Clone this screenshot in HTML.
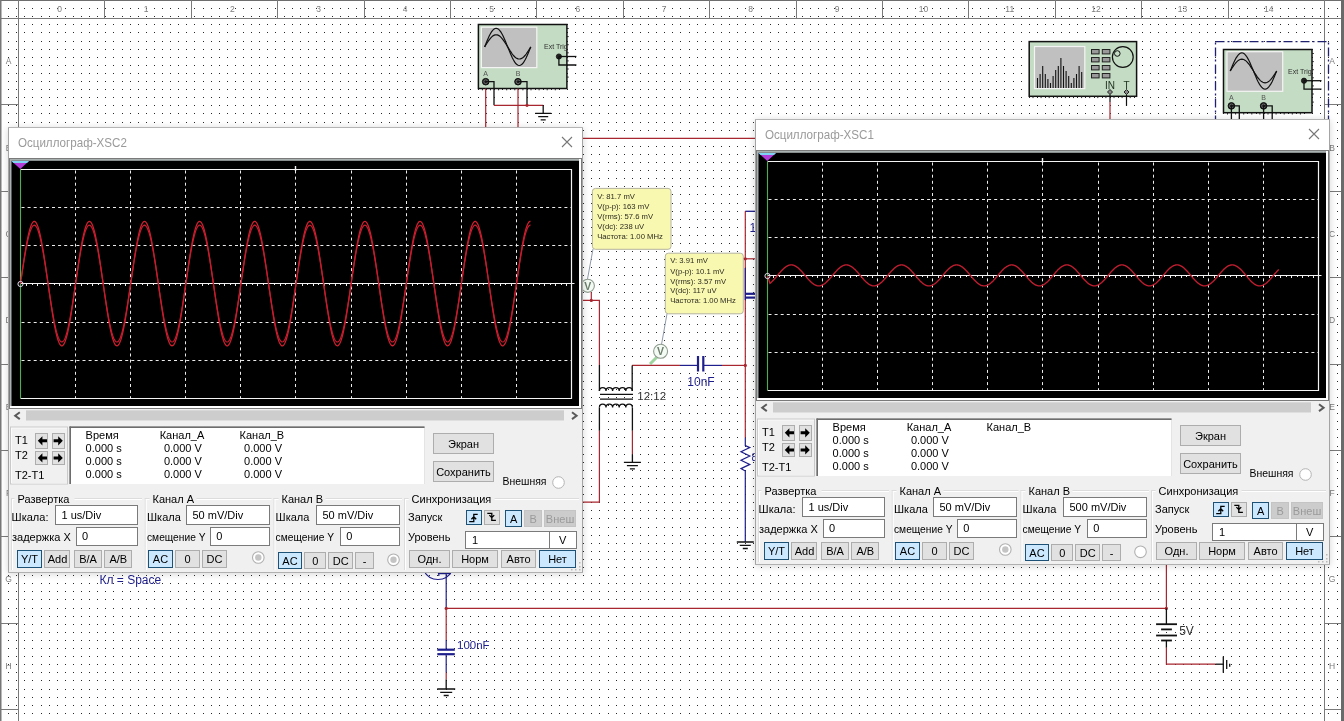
<!DOCTYPE html><html><head><meta charset="utf-8"><style>
body{margin:0;width:1344px;height:721px;overflow:hidden;background:#fff;position:relative;font-family:"Liberation Sans",sans-serif}
.a{position:absolute}
.win{position:absolute;width:575px;height:446px;background:#f0f0f0;box-shadow:0 1px 7px rgba(0,0,0,.16);}
.win svg{display:block;font-family:"Liberation Sans",sans-serif}
svg{will-change:transform}
</style></head><body><svg class="a" style="left:0;top:0" width="1344" height="721" font-family="Liberation Sans, sans-serif"><defs><path id="dr" d="M8 0h1v1h-1zM16 0h1v1h-1zM24 0h1v1h-1zM32 0h1v1h-1zM41 0h1v1h-1zM49 0h1v1h-1zM57 0h1v1h-1zM65 0h1v1h-1zM73 0h1v1h-1zM81 0h1v1h-1zM89 0h1v1h-1zM97 0h1v1h-1zM105 0h1v1h-1zM113 0h1v1h-1zM122 0h1v1h-1zM130 0h1v1h-1zM138 0h1v1h-1zM146 0h1v1h-1zM154 0h1v1h-1zM162 0h1v1h-1zM170 0h1v1h-1zM178 0h1v1h-1zM186 0h1v1h-1zM194 0h1v1h-1zM203 0h1v1h-1zM211 0h1v1h-1zM219 0h1v1h-1zM227 0h1v1h-1zM235 0h1v1h-1zM243 0h1v1h-1zM251 0h1v1h-1zM259 0h1v1h-1zM267 0h1v1h-1zM275 0h1v1h-1zM284 0h1v1h-1zM292 0h1v1h-1zM300 0h1v1h-1zM308 0h1v1h-1zM316 0h1v1h-1zM324 0h1v1h-1zM332 0h1v1h-1zM340 0h1v1h-1zM348 0h1v1h-1zM356 0h1v1h-1zM365 0h1v1h-1zM373 0h1v1h-1zM381 0h1v1h-1zM389 0h1v1h-1zM397 0h1v1h-1zM405 0h1v1h-1zM413 0h1v1h-1zM421 0h1v1h-1zM429 0h1v1h-1zM437 0h1v1h-1zM446 0h1v1h-1zM454 0h1v1h-1zM462 0h1v1h-1zM470 0h1v1h-1zM478 0h1v1h-1zM486 0h1v1h-1zM494 0h1v1h-1zM502 0h1v1h-1zM510 0h1v1h-1zM518 0h1v1h-1zM527 0h1v1h-1zM535 0h1v1h-1zM543 0h1v1h-1zM551 0h1v1h-1zM559 0h1v1h-1zM567 0h1v1h-1zM575 0h1v1h-1zM583 0h1v1h-1zM591 0h1v1h-1zM599 0h1v1h-1zM608 0h1v1h-1zM616 0h1v1h-1zM624 0h1v1h-1zM632 0h1v1h-1zM640 0h1v1h-1zM648 0h1v1h-1zM656 0h1v1h-1zM664 0h1v1h-1zM672 0h1v1h-1zM680 0h1v1h-1zM689 0h1v1h-1zM697 0h1v1h-1zM705 0h1v1h-1zM713 0h1v1h-1zM721 0h1v1h-1zM729 0h1v1h-1zM737 0h1v1h-1zM745 0h1v1h-1zM753 0h1v1h-1zM761 0h1v1h-1zM770 0h1v1h-1zM778 0h1v1h-1zM786 0h1v1h-1zM794 0h1v1h-1zM802 0h1v1h-1zM810 0h1v1h-1zM818 0h1v1h-1zM826 0h1v1h-1zM834 0h1v1h-1zM842 0h1v1h-1zM851 0h1v1h-1zM859 0h1v1h-1zM867 0h1v1h-1zM875 0h1v1h-1zM883 0h1v1h-1zM891 0h1v1h-1zM899 0h1v1h-1zM907 0h1v1h-1zM915 0h1v1h-1zM923 0h1v1h-1zM932 0h1v1h-1zM940 0h1v1h-1zM948 0h1v1h-1zM956 0h1v1h-1zM964 0h1v1h-1zM972 0h1v1h-1zM980 0h1v1h-1zM988 0h1v1h-1zM996 0h1v1h-1zM1004 0h1v1h-1zM1013 0h1v1h-1zM1021 0h1v1h-1zM1029 0h1v1h-1zM1037 0h1v1h-1zM1045 0h1v1h-1zM1053 0h1v1h-1zM1061 0h1v1h-1zM1069 0h1v1h-1zM1077 0h1v1h-1zM1085 0h1v1h-1zM1094 0h1v1h-1zM1102 0h1v1h-1zM1110 0h1v1h-1zM1118 0h1v1h-1zM1126 0h1v1h-1zM1134 0h1v1h-1zM1142 0h1v1h-1zM1150 0h1v1h-1zM1158 0h1v1h-1zM1166 0h1v1h-1zM1175 0h1v1h-1zM1183 0h1v1h-1zM1191 0h1v1h-1zM1199 0h1v1h-1zM1207 0h1v1h-1zM1215 0h1v1h-1zM1223 0h1v1h-1zM1231 0h1v1h-1zM1239 0h1v1h-1zM1247 0h1v1h-1zM1256 0h1v1h-1zM1264 0h1v1h-1zM1272 0h1v1h-1zM1280 0h1v1h-1zM1288 0h1v1h-1zM1296 0h1v1h-1zM1304 0h1v1h-1zM1312 0h1v1h-1zM1320 0h1v1h-1zM1328 0h1v1h-1zM1337 0h1v1h-1z" fill="#282828"/></defs><use href="#dr" y="8"/><use href="#dr" y="16"/><use href="#dr" y="24"/><use href="#dr" y="32"/><use href="#dr" y="41"/><use href="#dr" y="49"/><use href="#dr" y="57"/><use href="#dr" y="65"/><use href="#dr" y="73"/><use href="#dr" y="81"/><use href="#dr" y="89"/><use href="#dr" y="97"/><use href="#dr" y="105"/><use href="#dr" y="113"/><use href="#dr" y="122"/><use href="#dr" y="130"/><use href="#dr" y="138"/><use href="#dr" y="146"/><use href="#dr" y="154"/><use href="#dr" y="162"/><use href="#dr" y="170"/><use href="#dr" y="178"/><use href="#dr" y="186"/><use href="#dr" y="194"/><use href="#dr" y="203"/><use href="#dr" y="211"/><use href="#dr" y="219"/><use href="#dr" y="227"/><use href="#dr" y="235"/><use href="#dr" y="243"/><use href="#dr" y="251"/><use href="#dr" y="259"/><use href="#dr" y="267"/><use href="#dr" y="275"/><use href="#dr" y="284"/><use href="#dr" y="292"/><use href="#dr" y="300"/><use href="#dr" y="308"/><use href="#dr" y="316"/><use href="#dr" y="324"/><use href="#dr" y="332"/><use href="#dr" y="340"/><use href="#dr" y="348"/><use href="#dr" y="356"/><use href="#dr" y="365"/><use href="#dr" y="373"/><use href="#dr" y="381"/><use href="#dr" y="389"/><use href="#dr" y="397"/><use href="#dr" y="405"/><use href="#dr" y="413"/><use href="#dr" y="421"/><use href="#dr" y="429"/><use href="#dr" y="437"/><use href="#dr" y="446"/><use href="#dr" y="454"/><use href="#dr" y="462"/><use href="#dr" y="470"/><use href="#dr" y="478"/><use href="#dr" y="486"/><use href="#dr" y="494"/><use href="#dr" y="502"/><use href="#dr" y="510"/><use href="#dr" y="518"/><use href="#dr" y="527"/><use href="#dr" y="535"/><use href="#dr" y="543"/><use href="#dr" y="551"/><use href="#dr" y="559"/><use href="#dr" y="567"/><use href="#dr" y="575"/><use href="#dr" y="583"/><use href="#dr" y="591"/><use href="#dr" y="599"/><use href="#dr" y="608"/><use href="#dr" y="616"/><use href="#dr" y="624"/><use href="#dr" y="632"/><use href="#dr" y="640"/><use href="#dr" y="648"/><use href="#dr" y="656"/><use href="#dr" y="664"/><use href="#dr" y="672"/><use href="#dr" y="680"/><use href="#dr" y="689"/><use href="#dr" y="697"/><use href="#dr" y="705"/><use href="#dr" y="713"/><rect x="0" y="0" width="1344" height="1" fill="#6e6e6e"/><rect x="0" y="18" width="1341" height="1" fill="#7a7a7a"/><rect x="0" y="0" width="1.5" height="721" fill="#777"/><rect x="18" y="0" width="1" height="721" fill="#7a7a7a"/><rect x="1324" y="0" width="1" height="721" fill="#7a7a7a"/><rect x="1341" y="0" width="3" height="721" fill="#6a6a6a"/><rect x="104" y="0" width="1" height="18" fill="#7a7a7a"/><rect x="191" y="0" width="1" height="18" fill="#7a7a7a"/><rect x="277" y="0" width="1" height="18" fill="#7a7a7a"/><rect x="364" y="0" width="1" height="18" fill="#7a7a7a"/><rect x="450" y="0" width="1" height="18" fill="#7a7a7a"/><rect x="536" y="0" width="1" height="18" fill="#7a7a7a"/><rect x="623" y="0" width="1" height="18" fill="#7a7a7a"/><rect x="709" y="0" width="1" height="18" fill="#7a7a7a"/><rect x="796" y="0" width="1" height="18" fill="#7a7a7a"/><rect x="882" y="0" width="1" height="18" fill="#7a7a7a"/><rect x="968" y="0" width="1" height="18" fill="#7a7a7a"/><rect x="1055" y="0" width="1" height="18" fill="#7a7a7a"/><rect x="1141" y="0" width="1" height="18" fill="#7a7a7a"/><rect x="1228" y="0" width="1" height="18" fill="#7a7a7a"/><text x="59.6" y="12" font-size="8.5" fill="#7c7c7c" text-anchor="middle">0</text><text x="146.0" y="12" font-size="8.5" fill="#7c7c7c" text-anchor="middle">1</text><text x="232.3" y="12" font-size="8.5" fill="#7c7c7c" text-anchor="middle">2</text><text x="318.7" y="12" font-size="8.5" fill="#7c7c7c" text-anchor="middle">3</text><text x="405.1" y="12" font-size="8.5" fill="#7c7c7c" text-anchor="middle">4</text><text x="491.5" y="12" font-size="8.5" fill="#7c7c7c" text-anchor="middle">5</text><text x="577.9" y="12" font-size="8.5" fill="#7c7c7c" text-anchor="middle">6</text><text x="664.2" y="12" font-size="8.5" fill="#7c7c7c" text-anchor="middle">7</text><text x="750.6" y="12" font-size="8.5" fill="#7c7c7c" text-anchor="middle">8</text><text x="837.0" y="12" font-size="8.5" fill="#7c7c7c" text-anchor="middle">9</text><text x="923.4" y="12" font-size="8.5" fill="#7c7c7c" text-anchor="middle">10</text><text x="1009.7" y="12" font-size="8.5" fill="#7c7c7c" text-anchor="middle">11</text><text x="1096.1" y="12" font-size="8.5" fill="#7c7c7c" text-anchor="middle">12</text><text x="1182.5" y="12" font-size="8.5" fill="#7c7c7c" text-anchor="middle">13</text><text x="1268.8" y="12" font-size="8.5" fill="#7c7c7c" text-anchor="middle">14</text><rect x="0" y="104" width="18" height="1" fill="#7a7a7a"/><rect x="1325" y="104" width="16" height="1" fill="#7a7a7a"/><rect x="0" y="191" width="18" height="1" fill="#7a7a7a"/><rect x="1325" y="191" width="16" height="1" fill="#7a7a7a"/><rect x="0" y="277" width="18" height="1" fill="#7a7a7a"/><rect x="1325" y="277" width="16" height="1" fill="#7a7a7a"/><rect x="0" y="364" width="18" height="1" fill="#7a7a7a"/><rect x="1325" y="364" width="16" height="1" fill="#7a7a7a"/><rect x="0" y="450" width="18" height="1" fill="#7a7a7a"/><rect x="1325" y="450" width="16" height="1" fill="#7a7a7a"/><rect x="0" y="536" width="18" height="1" fill="#7a7a7a"/><rect x="1325" y="536" width="16" height="1" fill="#7a7a7a"/><rect x="0" y="623" width="18" height="1" fill="#7a7a7a"/><rect x="1325" y="623" width="16" height="1" fill="#7a7a7a"/><rect x="0" y="709" width="18" height="1" fill="#7a7a7a"/><rect x="1325" y="709" width="16" height="1" fill="#7a7a7a"/><text x="8.5" y="64.2" font-size="8.5" fill="#7c7c7c" text-anchor="middle">A</text><text x="1332" y="64.2" font-size="8.5" fill="#7c7c7c" text-anchor="middle">A</text><text x="8.5" y="150.6" font-size="8.5" fill="#7c7c7c" text-anchor="middle">B</text><text x="1332" y="150.6" font-size="8.5" fill="#7c7c7c" text-anchor="middle">B</text><text x="8.5" y="236.9" font-size="8.5" fill="#7c7c7c" text-anchor="middle">C</text><text x="1332" y="236.9" font-size="8.5" fill="#7c7c7c" text-anchor="middle">C</text><text x="8.5" y="323.3" font-size="8.5" fill="#7c7c7c" text-anchor="middle">D</text><text x="1332" y="323.3" font-size="8.5" fill="#7c7c7c" text-anchor="middle">D</text><text x="8.5" y="409.7" font-size="8.5" fill="#7c7c7c" text-anchor="middle">E</text><text x="1332" y="409.7" font-size="8.5" fill="#7c7c7c" text-anchor="middle">E</text><text x="8.5" y="496.1" font-size="8.5" fill="#7c7c7c" text-anchor="middle">F</text><text x="1332" y="496.1" font-size="8.5" fill="#7c7c7c" text-anchor="middle">F</text><text x="8.5" y="582.4" font-size="8.5" fill="#7c7c7c" text-anchor="middle">G</text><text x="1332" y="582.4" font-size="8.5" fill="#7c7c7c" text-anchor="middle">G</text><text x="8.5" y="668.8" font-size="8.5" fill="#7c7c7c" text-anchor="middle">H</text><text x="1332" y="668.8" font-size="8.5" fill="#7c7c7c" text-anchor="middle">H</text><rect x="478.4" y="24.5" width="88.5" height="64.0" fill="#c3dcc3" stroke="#111" stroke-width="1.5"/><path d="M482.4 88.5v1.8M490.5 88.5v1.8M498.6 88.5v1.8M506.7 88.5v1.8M514.8 88.5v1.8M522.9 88.5v1.8M531.0 88.5v1.8M539.1 88.5v1.8M547.2 88.5v1.8M555.3 88.5v1.8M566.9 28.5h1.8M566.9 36.6h1.8M566.9 44.7h1.8M566.9 52.8h1.8M566.9 60.9h1.8M566.9 69.0h1.8M566.9 77.1h1.8" stroke="#222" stroke-width="1"/><rect x="481.4" y="27.2" width="55.39999999999998" height="40.39999999999999" fill="#c0c0c0" stroke="#f4f4f4" stroke-width="1.2"/><path d="M484.6 46.9L485.8 44.0L486.9 41.2L488.1 38.5L489.2 36.0L490.4 33.8L491.5 31.9L492.7 30.3L493.8 29.2L495.0 28.5L496.1 28.3L497.3 28.5L498.5 29.2L499.6 30.3L500.8 31.9L501.9 33.8L503.1 36.0L504.2 38.5L505.4 41.2L506.5 44.0L507.7 46.9L508.9 49.8L510.0 52.6L511.2 55.3L512.3 57.8L513.5 60.0L514.6 61.9L515.8 63.5L516.9 64.6L518.1 65.3L519.2 65.5L520.4 65.3L521.6 64.6L522.7 63.5L523.9 61.9L525.0 60.0L526.2 57.8L527.3 55.3L528.5 52.6L529.6 49.8L530.8 46.9" stroke="#111" stroke-width="1.2" fill="none"/><path d="M484.6 46.9L485.8 45.0L486.9 43.2L488.1 41.4L489.2 39.8L490.4 38.3L491.5 37.1L492.7 36.1L493.8 35.4L495.0 34.9L496.1 34.8L497.3 34.9L498.5 35.4L499.6 36.1L500.8 37.1L501.9 38.3L503.1 39.8L504.2 41.4L505.4 43.2L506.5 45.0L507.7 46.9L508.9 48.8L510.0 50.6L511.2 52.4L512.3 54.0L513.5 55.5L514.6 56.7L515.8 57.7L516.9 58.4L518.1 58.9L519.2 59.0L520.4 58.9L521.6 58.4L522.7 57.7L523.9 56.7L525.0 55.5L526.2 54.0L527.3 52.4L528.5 50.6L529.6 48.8L530.8 46.9" stroke="#111" stroke-width="1.2" fill="none"/><text x="544" y="49" font-size="7" fill="#333">Ext Trig</text><circle cx="558.9" cy="56.5" r="2.6" fill="#222" stroke="#111" stroke-width="0.8"/><path d="M558.9 56.5L576.4 56.5" stroke="#111" stroke-width="1.3" fill="none"/><path d="M558.9 56.5L558.9 65.0L576.4 65.0" stroke="#111" stroke-width="1.3" fill="none"/><circle cx="485.7" cy="81.7" r="3.3" fill="#1a1a1a" stroke="#111" stroke-width="1"/><circle cx="485.7" cy="81.7" r="1.9" fill="none" stroke="#9a9a9a" stroke-width="0.6"/><text x="485.7" y="75.9" font-size="7" fill="#555" text-anchor="middle">A</text><circle cx="518" cy="81.7" r="3.3" fill="#1a1a1a" stroke="#111" stroke-width="1"/><circle cx="518" cy="81.7" r="1.9" fill="none" stroke="#9a9a9a" stroke-width="0.6"/><text x="518" y="75.9" font-size="7" fill="#555" text-anchor="middle">B</text><path d="M485.7 81.7L494 81.7L494 105.3" stroke="#111" stroke-width="1.3" fill="none"/><path d="M518 81.7L527 81.7L527 105.3" stroke="#111" stroke-width="1.3" fill="none"/><path d="M494 105.3L543.2 105.3" stroke="#a8262f" stroke-width="1.2" fill="none"/><path d="M543.2 105.3L543.2 113.4" stroke="#111" stroke-width="1.3" fill="none"/><path d="M535.2 113.4h16M538.2 116.7h10M540.7 119.9h5" stroke="#111" stroke-width="1.3"/><circle cx="527" cy="105.3" r="1.6" fill="#a8262f"/><path d="M485.7 88.5L485.7 127" stroke="#a8262f" stroke-width="1.2" fill="none"/><path d="M518 88.5L518 127" stroke="#a8262f" stroke-width="1.2" fill="none"/><path d="M580 138.3L756 138.3" stroke="#a8262f" stroke-width="1.2" fill="none"/><rect x="1029.2" y="41.6" width="107.4" height="54.7" fill="#c3dcc3" stroke="#111" stroke-width="1.5"/><path d="M1033.0 96.3v1.8M1041.1 96.3v1.8M1049.2 96.3v1.8M1057.3 96.3v1.8M1065.4 96.3v1.8M1073.5 96.3v1.8M1081.6 96.3v1.8M1089.7 96.3v1.8M1097.8 96.3v1.8M1105.9 96.3v1.8M1114.0 96.3v1.8M1122.1 96.3v1.8M1130.2 96.3v1.8" stroke="#222"/><rect x="1034.5" y="46.5" width="50.3" height="42.1" fill="#c0c0c0" stroke="#f4f4f4" stroke-width="1.2"/><path d="M1037.5 88V78M1040.1 88V74M1042.7 88V66M1045.3 88V74M1047.9 88V79M1050.5 88V83M1053.1 88V76M1055.7 88V70M1058.3 88V66M1060.9 88V58M1063.5 88V66M1066.1 88V71M1068.7 88V76M1071.3 88V83M1073.9 88V78M1076.5 88V74M1079.1 88V66M1081.7 88V72" stroke="#111" stroke-width="1.1"/><rect x="1091.5" y="49.5" width="7.6" height="4.4" fill="#999" stroke="#222" stroke-width="1"/><rect x="1102.3" y="49.5" width="7.6" height="4.4" fill="#999" stroke="#222" stroke-width="1"/><rect x="1091.5" y="57.5" width="7.6" height="4.4" fill="#999" stroke="#222" stroke-width="1"/><rect x="1102.3" y="57.5" width="7.6" height="4.4" fill="#999" stroke="#222" stroke-width="1"/><rect x="1091.5" y="65.5" width="7.6" height="4.4" fill="#999" stroke="#222" stroke-width="1"/><rect x="1102.3" y="65.5" width="7.6" height="4.4" fill="#999" stroke="#222" stroke-width="1"/><rect x="1091.5" y="73.5" width="7.6" height="4.4" fill="#999" stroke="#222" stroke-width="1"/><rect x="1102.3" y="73.5" width="7.6" height="4.4" fill="#999" stroke="#222" stroke-width="1"/><circle cx="1122.8" cy="57" r="10.4" fill="none" stroke="#111" stroke-width="1.2"/><circle cx="1117.3" cy="53.5" r="2.8" fill="none" stroke="#111" stroke-width="1"/><text x="1110" y="88.5" font-size="10" fill="#223322" text-anchor="middle">IN</text><text x="1126.5" y="88.5" font-size="10" fill="#223322" text-anchor="middle">T</text><path d="M1110 89.5l2.5 2.5-2.5 2.5-2.5-2.5zM1126.5 89.5l2.5 2.5-2.5 2.5-2.5-2.5z" fill="#888" stroke="#222" stroke-width="1"/><path d="M1110 94.5L1110 102" stroke="#111" stroke-width="1.2" fill="none"/><path d="M1110 102L1110 120" stroke="#a8262f" stroke-width="1.2" fill="none"/><path d="M1126.5 94.5L1126.5 105.8" stroke="#111" stroke-width="1.2" fill="none"/><rect x="1215.5" y="41.6" width="113" height="90" fill="none" stroke="#20206e" stroke-width="1.3" stroke-dasharray="9 3 2 3"/><rect x="1223.5" y="49.5" width="88.5" height="63.2" fill="#c3dcc3" stroke="#111" stroke-width="1.5"/><path d="M1227.5 112.7v1.8M1235.6 112.7v1.8M1243.7 112.7v1.8M1251.8 112.7v1.8M1259.9 112.7v1.8M1268.0 112.7v1.8M1276.1 112.7v1.8M1284.2 112.7v1.8M1292.3 112.7v1.8M1300.4 112.7v1.8M1312 53.5h1.8M1312 61.6h1.8M1312 69.7h1.8M1312 77.8h1.8M1312 85.9h1.8M1312 94.0h1.8M1312 102.1h1.8" stroke="#222" stroke-width="1"/><rect x="1227" y="51.7" width="55.700000000000045" height="39.599999999999994" fill="#c0c0c0" stroke="#f4f4f4" stroke-width="1.2"/><path d="M1230.2 71.0L1231.4 68.2L1232.5 65.4L1233.7 62.7L1234.9 60.3L1236.0 58.1L1237.2 56.3L1238.3 54.8L1239.5 53.7L1240.7 53.0L1241.8 52.8L1243.0 53.0L1244.2 53.7L1245.3 54.8L1246.5 56.3L1247.6 58.1L1248.8 60.3L1250.0 62.7L1251.1 65.4L1252.3 68.2L1253.5 71.0L1254.6 73.8L1255.8 76.6L1256.9 79.3L1258.1 81.7L1259.3 83.9L1260.4 85.7L1261.6 87.2L1262.8 88.3L1263.9 89.0L1265.1 89.2L1266.2 89.0L1267.4 88.3L1268.6 87.2L1269.7 85.7L1270.9 83.9L1272.1 81.7L1273.2 79.3L1274.4 76.6L1275.5 73.8L1276.7 71.0" stroke="#111" stroke-width="1.2" fill="none"/><path d="M1230.2 71.0L1231.4 69.1L1232.5 67.3L1233.7 65.6L1234.9 64.0L1236.0 62.6L1237.2 61.4L1238.3 60.4L1239.5 59.7L1240.7 59.3L1241.8 59.1L1243.0 59.3L1244.2 59.7L1245.3 60.4L1246.5 61.4L1247.6 62.6L1248.8 64.0L1250.0 65.6L1251.1 67.3L1252.3 69.1L1253.5 71.0L1254.6 72.9L1255.8 74.7L1256.9 76.4L1258.1 78.0L1259.3 79.4L1260.4 80.6L1261.6 81.6L1262.8 82.3L1263.9 82.7L1265.1 82.9L1266.2 82.7L1267.4 82.3L1268.6 81.6L1269.7 80.6L1270.9 79.4L1272.1 78.0L1273.2 76.4L1274.4 74.7L1275.5 72.9L1276.7 71.0" stroke="#111" stroke-width="1.2" fill="none"/><text x="1288" y="74" font-size="7" fill="#333">Ext Trig</text><circle cx="1304" cy="80.7" r="2.6" fill="#222" stroke="#111" stroke-width="0.8"/><path d="M1304 80.7L1321.5 80.7" stroke="#111" stroke-width="1.3" fill="none"/><path d="M1304 80.7L1304 89.2L1321.5 89.2" stroke="#111" stroke-width="1.3" fill="none"/><circle cx="1231.4" cy="105.9" r="3.3" fill="#1a1a1a" stroke="#111" stroke-width="1"/><circle cx="1231.4" cy="105.9" r="1.9" fill="none" stroke="#9a9a9a" stroke-width="0.6"/><text x="1231.4" y="100.10000000000001" font-size="7" fill="#555" text-anchor="middle">A</text><circle cx="1263.6" cy="105.9" r="3.3" fill="#1a1a1a" stroke="#111" stroke-width="1"/><circle cx="1263.6" cy="105.9" r="1.9" fill="none" stroke="#9a9a9a" stroke-width="0.6"/><text x="1263.6" y="100.10000000000001" font-size="7" fill="#555" text-anchor="middle">B</text><path d="M1231.4 105.9L1239.3 105.9L1239.3 120" stroke="#111" stroke-width="1.3" fill="none"/><path d="M1263.6 105.9L1272.2 105.9L1272.2 120" stroke="#111" stroke-width="1.3" fill="none"/><path d="M1231.4 105.9L1231.4 120" stroke="#111" stroke-width="1.3" fill="none"/><path d="M1263.6 105.9L1263.6 120" stroke="#111" stroke-width="1.3" fill="none"/><path d="M587.5 279L593 249" stroke="#8f9aaa" stroke-width="1" fill="none"/><rect x="592.4" y="188.4" width="78.60000000000002" height="60.900000000000006" rx="3" fill="#f9f8b0" stroke="#b4b4a0" stroke-width="1"/><text x="597.2" y="198.6" font-size="7.7" fill="#2c2c20">V: 81.7 mV</text><text x="597.2" y="208.8" font-size="7.7" fill="#2c2c20">V(p-p): 163 mV</text><text x="597.2" y="219" font-size="7.7" fill="#2c2c20">V(rms): 57.6 mV</text><text x="597.2" y="228.7" font-size="7.7" fill="#2c2c20">V(dc): 238 uV</text><text x="597.2" y="238.6" font-size="7.7" fill="#2c2c20">Частота: 1.00 MHz</text><path d="M661.5 344.5L667 313.8" stroke="#8f9aaa" stroke-width="1" fill="none"/><rect x="665.3" y="253.2" width="78.0" height="60.60000000000002" rx="3" fill="#f9f8b0" stroke="#b4b4a0" stroke-width="1"/><text x="670.2" y="263.3" font-size="7.7" fill="#2c2c20">V: 3.91 mV</text><text x="670.2" y="273.5" font-size="7.7" fill="#2c2c20">V(p-p): 10.1 mV</text><text x="670.2" y="283.7" font-size="7.7" fill="#2c2c20">V(rms): 3.57 mV</text><text x="670.2" y="293.4" font-size="7.7" fill="#2c2c20">V(dc): 117 uV</text><text x="670.2" y="303.3" font-size="7.7" fill="#2c2c20">Частота: 1.00 MHz</text><path d="M591.3 292L591.3 300.4" stroke="#a8262f" stroke-width="1.2" fill="none"/><circle cx="587.8" cy="285.8" r="6.6" fill="#f4faf4" stroke="#8e9c8e" stroke-width="1.1"/><text x="587.8" y="289.6" font-size="10.5" fill="#6c7e6c" text-anchor="middle" font-weight="bold">V</text><path d="M582 300.4L599.4 300.4L599.4 365" stroke="#a8262f" stroke-width="1.2" fill="none"/><circle cx="591.3" cy="300.4" r="1.6" fill="#a8262f"/><path d="M599.4 365L599.4 391" stroke="#111" stroke-width="1.3" fill="none"/><path d="M650 364L656.5 357.5" stroke="#9ed49e" stroke-width="3" fill="none"/><circle cx="660.6" cy="351.3" r="7" fill="#f4faf4" stroke="#8e9c8e" stroke-width="1.1"/><text x="660.6" y="355.1" font-size="10.5" fill="#6c7e6c" text-anchor="middle" font-weight="bold">V</text><path d="M632.2 365.4L680 365.4" stroke="#a8262f" stroke-width="1.2" fill="none"/><path d="M680 365.4L698 365.4" stroke="#1e1e8c" stroke-width="1.2" fill="none"/><path d="M703.3 365.4L722 365.4" stroke="#1e1e8c" stroke-width="1.2" fill="none"/><path d="M722 365.4L745.5 365.4" stroke="#a8262f" stroke-width="1.2" fill="none"/><path d="M698 356L698 371.5" stroke="#1e1e8c" stroke-width="2.2" fill="none"/><path d="M703.3 356L703.3 371.5" stroke="#1e1e8c" stroke-width="2.2" fill="none"/><text x="701" y="385.5" font-size="12" fill="#1e1e8c" text-anchor="middle">10nF</text><path d="M632.2 365.4L632.2 391" stroke="#111" stroke-width="1.3" fill="none"/><path d="M599.4 391a3.3 3.3 0 0 1 6.6 0a3.3 3.3 0 0 1 6.6 0a3.3 3.3 0 0 1 6.6 0a3.3 3.3 0 0 1 6.6 0a3.3 3.3 0 0 1 6.6 0" stroke="#111" stroke-width="1.3" fill="none"/><path d="M599.4 407.5a3.3 3.3 0 0 1 6.6 0a3.3 3.3 0 0 1 6.6 0a3.3 3.3 0 0 1 6.6 0a3.3 3.3 0 0 1 6.6 0a3.3 3.3 0 0 1 6.6 0" stroke="#111" stroke-width="1.3" fill="none"/><path d="M600 394.4L633 394.4" stroke="#111" stroke-width="1.3" fill="none"/><path d="M600 399.1L633 399.1" stroke="#111" stroke-width="1.3" fill="none"/><text x="637.3" y="400.3" font-size="11.5" fill="#333">12:12</text><path d="M599.4 407.5L599.4 430.8" stroke="#111" stroke-width="1.3" fill="none"/><path d="M599.4 430.8L599.4 502.2L580 502.2" stroke="#a8262f" stroke-width="1.2" fill="none"/><path d="M632.4 407.5L632.4 430.8" stroke="#111" stroke-width="1.3" fill="none"/><path d="M632.4 430.8L632.4 454.4" stroke="#a8262f" stroke-width="1.2" fill="none"/><path d="M632.4 454.4L632.4 462.4" stroke="#111" stroke-width="1.3" fill="none"/><path d="M623.9 462.4h17M626.9 465.7h11M629.9 468.9h5" stroke="#111" stroke-width="1.3"/><path d="M745.3 211.3L757 211.3" stroke="#1e1e8c" stroke-width="1.3" fill="none"/><text x="749.5" y="232" font-size="12" fill="#1e1e8c">1</text><path d="M745.3 211.3L745.3 437.8" stroke="#a8262f" stroke-width="1.2" fill="none"/><circle cx="745.3" cy="258.8" r="1.6" fill="#a8262f"/><path d="M745.3 258.8L757 258.8" stroke="#a8262f" stroke-width="1.2" fill="none"/><circle cx="745.3" cy="365.4" r="1.6" fill="#a8262f"/><path d="M745.3 268L745.3 300" stroke="#1e1e8c" stroke-width="1.2" fill="none"/><path d="M745.3 293.8L757 293.8" stroke="#1e1e8c" stroke-width="2.2" fill="none"/><path d="M745.3 297.6L757 297.6" stroke="#1e1e8c" stroke-width="2.2" fill="none"/><path d="M745.3 437.8L745.3 445.5L749.8 447.6L741 451.8L749.8 456L741 460.2L749.8 464.4L741 468.6L745.3 471L745.3 542" stroke="#1e1e8c" stroke-width="1.2" fill="none"/><path d="M736.8 542h17M739.8 545.3h11M742.8 548.5h5" stroke="#111" stroke-width="1.3"/><text x="751.5" y="461" font-size="10" fill="#1e1e8c">8</text><text x="99.5" y="584" font-size="12" fill="#1e1e8c">Кл = Space</text><path d="M424 571A15.8 15.8 0 0 0 452 571" stroke="#1e1e8c" stroke-width="1.1" fill="none"/><path d="M437.9 573.6L450.9 573.6" stroke="#1e1e8c" stroke-width="1.2" fill="none"/><path d="M438.8 571L438.8 576" stroke="#1e1e8c" stroke-width="1.2" fill="none"/><path d="M446.2 573.6L446.2 608.4" stroke="#1e1e8c" stroke-width="1.2" fill="none"/><path d="M446.2 608.4L1166.4 608.4" stroke="#a8262f" stroke-width="1.2" fill="none"/><circle cx="446.2" cy="608.4" r="1.6" fill="#a8262f"/><path d="M446.2 608.4L446.2 640" stroke="#a8262f" stroke-width="1.2" fill="none"/><path d="M446.2 640L446.2 649.7" stroke="#1e1e8c" stroke-width="1.2" fill="none"/><path d="M446.2 654.2L446.2 672.6" stroke="#1e1e8c" stroke-width="1.2" fill="none"/><path d="M437.3 649.7L454.8 649.7" stroke="#1e1e8c" stroke-width="2.2" fill="none"/><path d="M437.3 654.2L454.8 654.2" stroke="#1e1e8c" stroke-width="2.2" fill="none"/><path d="M446.2 672.6L446.2 679.4" stroke="#a8262f" stroke-width="1.2" fill="none"/><path d="M446.2 679.4L446.2 689" stroke="#111" stroke-width="1.3" fill="none"/><path d="M437.2 689h18M440.2 692.3h12M443.7 695.5h5" stroke="#111" stroke-width="1.3"/><text x="457" y="648.5" font-size="11.5" fill="#1e1e8c">100nF</text><path d="M1166.4 563L1166.4 608.4" stroke="#a8262f" stroke-width="1.2" fill="none"/><circle cx="1166.4" cy="608.4" r="1.6" fill="#a8262f"/><path d="M1166.4 608.4L1166.4 624.2" stroke="#111" stroke-width="1.3" fill="none"/><path d="M1156.1 624.2L1177 624.2" stroke="#111" stroke-width="1.8" fill="none"/><path d="M1161.1 629.4L1171.9 629.4" stroke="#111" stroke-width="1.8" fill="none"/><path d="M1156.1 635.5L1177 635.5" stroke="#111" stroke-width="1.8" fill="none"/><path d="M1161.1 640.5L1171.9 640.5" stroke="#111" stroke-width="1.8" fill="none"/><path d="M1166.4 640.5L1166.4 647.8" stroke="#111" stroke-width="1.3" fill="none"/><path d="M1166.4 647.8L1166.4 664.2L1215.5 664.2" stroke="#a8262f" stroke-width="1.2" fill="none"/><path d="M1215.5 664.2L1223.3 664.2" stroke="#111" stroke-width="1.3" fill="none"/><path d="M1223.3 656.4v16.4M1226.7 660v9M1229.7 663.8v3" stroke="#111" stroke-width="1.3"/><text x="1179.2" y="635.4" font-size="12" fill="#333">5V</text></svg><div class="win" style="left:8px;top:127px"><svg width="575" height="446"><rect x="0.00" y="0.00" width="575.00" height="446.00" fill="#f0f0f0"/><rect x="0.00" y="0.00" width="575.00" height="31.00" fill="#ffffff"/><rect x="0.00" y="31.00" width="575.00" height="1.00" fill="#6e6e6e"/><rect x="0.00" y="0.00" width="1.00" height="446.00" fill="#a4a4a4"/><rect x="574.00" y="0.00" width="1.00" height="446.00" fill="#a4a4a4"/><rect x="0.00" y="445.00" width="575.00" height="1.00" fill="#b0b0b0"/><rect x="0.00" y="0.00" width="575.00" height="1.00" fill="#b4b4b4"/><path d="M571 435h1.5v1.5h-1.5zM571 439h1.5v1.5h-1.5zM567 442h1.5v1.5h-1.5zM571 442h1.5v1.5h-1.5zM563 442h1.5v1.5h-1.5z" fill="#b8b8b8"/><text x="0" y="20.2" font-size="13.2" fill="#9a9a9a" transform="translate(9.9 0) scale(0.88 1)">Осциллограф-XSC2</text><path d="M554 10L564 20M564 10L554 20" stroke="#777" stroke-width="1.1"/><rect x="1.00" y="31.00" width="573.00" height="251.00" fill="#7a7a7a"/><rect x="2.00" y="32.00" width="571.00" height="249.00" fill="#ffffff"/><rect x="2.00" y="32.00" width="569.00" height="247.00" fill="#a9b0b0"/><rect x="3.50" y="33.80" width="567.50" height="245.20" fill="#000"/><path d="M67.5 43.5V271.5M122.5 43.5V271.5M177.5 43.5V271.5M232.5 43.5V271.5M287.5 43.5V271.5M343.5 43.5V271.5M398.5 43.5V271.5M453.5 43.5V271.5M508.5 43.5V271.5M13.5 80.5H563.5M13.5 118.5H563.5M13.5 195.5H563.5M13.5 233.5H563.5" stroke="#ececec" stroke-width="1" stroke-dasharray="3 3.1" fill="none"/><path d="M18.5 156.5v2.5M24.5 156.5v1.5M29.5 156.5v2.5M35.5 156.5v1.5M40.5 156.5v2.5M46.5 156.5v1.5M51.5 156.5v2.5M57.5 156.5v1.5M62.5 156.5v2.5M73.5 156.5v2.5M79.5 156.5v1.5M84.5 156.5v2.5M90.5 156.5v1.5M95.5 156.5v2.5M101.5 156.5v1.5M106.5 156.5v2.5M112.5 156.5v1.5M117.5 156.5v2.5M128.5 156.5v2.5M134.5 156.5v1.5M139.5 156.5v2.5M145.5 156.5v1.5M150.5 156.5v2.5M156.5 156.5v1.5M161.5 156.5v2.5M167.5 156.5v1.5M172.5 156.5v2.5M183.5 156.5v2.5M189.5 156.5v1.5M194.5 156.5v2.5M200.5 156.5v1.5M205.5 156.5v2.5M211.5 156.5v1.5M216.5 156.5v2.5M222.5 156.5v1.5M227.5 156.5v2.5M238.5 156.5v2.5M244.5 156.5v1.5M249.5 156.5v2.5M255.5 156.5v1.5M260.5 156.5v2.5M266.5 156.5v1.5M272.5 156.5v2.5M277.5 156.5v1.5M283.5 156.5v2.5M294.5 156.5v2.5M299.5 156.5v1.5M305.5 156.5v2.5M310.5 156.5v1.5M316.5 156.5v2.5M321.5 156.5v1.5M327.5 156.5v2.5M332.5 156.5v1.5M338.5 156.5v2.5M349.5 156.5v2.5M354.5 156.5v1.5M360.5 156.5v2.5M365.5 156.5v1.5M371.5 156.5v2.5M376.5 156.5v1.5M382.5 156.5v2.5M387.5 156.5v1.5M393.5 156.5v2.5M404.5 156.5v2.5M409.5 156.5v1.5M415.5 156.5v2.5M420.5 156.5v1.5M426.5 156.5v2.5M431.5 156.5v1.5M437.5 156.5v2.5M442.5 156.5v1.5M448.5 156.5v2.5M459.5 156.5v2.5M464.5 156.5v1.5M470.5 156.5v2.5M475.5 156.5v1.5M481.5 156.5v2.5M486.5 156.5v1.5M492.5 156.5v2.5M497.5 156.5v1.5M503.5 156.5v2.5M514.5 156.5v2.5M520.5 156.5v1.5M525.5 156.5v2.5M531.5 156.5v1.5M536.5 156.5v2.5M542.5 156.5v1.5M547.5 156.5v2.5M553.5 156.5v1.5M558.5 156.5v2.5" stroke="#eeeeee" stroke-width="1" fill="none"/><path d="M12.5 42.5H563.5V271.5H12.5M12.5 156.5H566.5" stroke="#f4f4f4" stroke-width="1.2" fill="none"/><path d="M12.5 42.5V271.5" stroke="#4caf50" stroke-width="1.1"/><path d="M287.5 39V44" stroke="#f4f4f4" stroke-width="1.4"/><path d="M12.5 156.6L13.0 153.1L13.5 149.5L14.0 146.0L14.5 142.5L15.0 139.1L15.5 135.7L16.0 132.4L16.5 129.2L17.0 126.1L17.5 123.0L18.0 120.1L18.5 117.3L19.0 114.6L19.5 112.1L20.0 109.7L20.5 107.4L21.0 105.3L21.5 103.4L22.0 101.7L22.5 100.1L23.0 98.7L23.5 97.5L24.0 96.5L24.5 95.7L25.0 95.1L25.5 94.6L26.0 94.4L26.5 94.4L27.0 94.6L27.5 95.0L28.0 95.6L28.5 96.4L29.0 97.4L29.5 98.6L30.0 99.9L30.5 101.5L31.0 103.2L31.5 105.1L32.0 107.2L32.5 109.4L33.0 111.8L33.5 114.3L34.0 117.0L34.5 119.8L35.0 122.7L35.5 125.7L36.0 128.9L36.5 132.1L37.0 135.4L37.5 138.7L38.0 142.2L38.5 145.6L39.0 149.1L39.5 152.7L40.0 156.2L40.5 159.8L41.0 163.3L41.5 166.8L42.0 170.3L42.5 173.7L43.0 177.1L43.5 180.4L44.0 183.6L44.5 186.8L45.0 189.8L45.5 192.8L46.0 195.6L46.5 198.3L47.0 200.9L47.5 203.3L48.0 205.5L48.5 207.7L49.0 209.6L49.5 211.4L50.0 213.0L50.5 214.4L51.0 215.6L51.5 216.6L52.0 217.4L52.5 218.1L53.0 218.5L53.5 218.8L54.0 218.8L54.5 218.6L55.0 218.2L55.5 217.7L56.0 216.9L56.5 215.9L57.0 214.8L57.5 213.4L58.0 211.9L58.5 210.2L59.0 208.3L59.5 206.3L60.0 204.0L60.5 201.7L61.0 199.2L61.5 196.5L62.0 193.7L62.5 190.8L63.0 187.8L63.5 184.7L64.0 181.5L64.5 178.2L65.0 174.8L65.5 171.4L66.0 168.0L66.5 164.5L67.0 160.9L67.5 157.4L68.0 153.8L68.5 150.3L69.0 146.8L69.5 143.3L70.0 139.9L70.5 136.5L71.0 133.2L71.5 129.9L72.0 126.8L72.5 123.7L73.0 120.7L73.5 117.9L74.0 115.2L74.5 112.6L75.0 110.2L75.5 107.9L76.0 105.8L76.5 103.8L77.0 102.0L77.5 100.4L78.0 99.0L78.5 97.7L79.0 96.7L79.5 95.8L80.0 95.2L80.5 94.7L81.0 94.5L81.5 94.4L82.0 94.6L82.5 94.9L83.0 95.4L83.5 96.2L84.0 97.1L84.5 98.3L85.0 99.6L85.5 101.1L86.0 102.8L86.5 104.7L87.0 106.7L87.5 108.9L88.0 111.3L88.5 113.8L89.0 116.4L89.5 119.2L90.0 122.1L90.5 125.1L91.0 128.2L91.5 131.4L92.0 134.6L92.5 138.0L93.0 141.4L93.5 144.9L94.0 148.4L94.5 151.9L95.0 155.4L95.5 159.0L96.0 162.5L96.5 166.0L97.0 169.5L97.5 173.0L98.0 176.4L98.5 179.7L99.0 182.9L99.5 186.1L100.0 189.2L100.5 192.1L101.0 195.0L101.5 197.7L102.0 200.3L102.5 202.8L103.0 205.1L103.5 207.2L104.0 209.2L104.5 211.0L105.0 212.6L105.5 214.1L106.0 215.3L106.5 216.4L107.0 217.3L107.5 218.0L108.0 218.4L108.5 218.7L109.0 218.8L109.5 218.7L110.0 218.3L110.5 217.8L111.0 217.1L111.5 216.2L112.0 215.1L112.5 213.8L113.0 212.3L113.5 210.6L114.0 208.7L114.5 206.7L115.0 204.5L115.5 202.2L116.0 199.7L116.5 197.1L117.0 194.3L117.5 191.5L118.0 188.5L118.5 185.4L119.0 182.2L119.5 178.9L120.0 175.6L120.5 172.2L121.0 168.7L121.5 165.2L122.0 161.7L122.5 158.2L123.0 154.6L123.5 151.1L124.0 147.6L124.5 144.1L125.0 140.6L125.5 137.2L126.0 133.9L126.5 130.6L127.0 127.4L127.5 124.4L128.0 121.4L128.5 118.5L129.0 115.8L129.5 113.2L130.0 110.7L130.5 108.4L131.0 106.2L131.5 104.2L132.0 102.4L132.5 100.7L133.0 99.3L133.5 98.0L134.0 96.9L134.5 96.0L135.0 95.3L135.5 94.8L136.0 94.5L136.5 94.4L137.0 94.5L137.5 94.8L138.0 95.3L138.5 96.0L139.0 96.9L139.5 98.0L140.0 99.3L140.5 100.8L141.0 102.4L141.5 104.2L142.0 106.2L142.5 108.4L143.0 110.7L143.5 113.2L144.0 115.8L144.5 118.5L145.0 121.4L145.5 124.4L146.0 127.5L146.5 130.6L147.0 133.9L147.5 137.2L148.0 140.6L148.5 144.1L149.0 147.6L149.5 151.1L150.0 154.7L150.5 158.2L151.0 161.7L151.5 165.3L152.0 168.8L152.5 172.2L153.0 175.6L153.5 179.0L154.0 182.2L154.5 185.4L155.0 188.5L155.5 191.5L156.0 194.4L156.5 197.1L157.0 199.8L157.5 202.2L158.0 204.6L158.5 206.7L159.0 208.8L159.5 210.6L160.0 212.3L160.5 213.8L161.0 215.1L161.5 216.2L162.0 217.1L162.5 217.8L163.0 218.4L163.5 218.7L164.0 218.8L164.5 218.7L165.0 218.4L165.5 218.0L166.0 217.3L166.5 216.4L167.0 215.3L167.5 214.1L168.0 212.6L168.5 211.0L169.0 209.2L169.5 207.2L170.0 205.0L170.5 202.7L171.0 200.3L171.5 197.7L172.0 195.0L172.5 192.1L173.0 189.1L173.5 186.1L174.0 182.9L174.5 179.7L175.0 176.3L175.5 172.9L176.0 169.5L176.5 166.0L177.0 162.5L177.5 158.9L178.0 155.4L178.5 151.9L179.0 148.3L179.5 144.8L180.0 141.4L180.5 138.0L181.0 134.6L181.5 131.3L182.0 128.1L182.5 125.0L183.0 122.0L183.5 119.1L184.0 116.4L184.5 113.7L185.0 111.2L185.5 108.9L186.0 106.7L186.5 104.7L187.0 102.8L187.5 101.1L188.0 99.6L188.5 98.3L189.0 97.1L189.5 96.2L190.0 95.4L190.5 94.9L191.0 94.5L191.5 94.4L192.0 94.5L192.5 94.7L193.0 95.2L193.5 95.8L194.0 96.7L194.5 97.8L195.0 99.0L195.5 100.4L196.0 102.0L196.5 103.8L197.0 105.8L197.5 107.9L198.0 110.2L198.5 112.6L199.0 115.2L199.5 117.9L200.0 120.8L200.5 123.7L201.0 126.8L201.5 129.9L202.0 133.2L202.5 136.5L203.0 139.9L203.5 143.3L204.0 146.8L204.5 150.3L205.0 153.9L205.5 157.4L206.0 161.0L206.5 164.5L207.0 168.0L207.5 171.5L208.0 174.9L208.5 178.2L209.0 181.5L209.5 184.7L210.0 187.8L210.5 190.9L211.0 193.8L211.5 196.5L212.0 199.2L212.5 201.7L213.0 204.1L213.5 206.3L214.0 208.3L214.5 210.2L215.0 211.9L215.5 213.5L216.0 214.8L216.5 216.0L217.0 216.9L217.5 217.7L218.0 218.3L218.5 218.6L219.0 218.8L219.5 218.8L220.0 218.5L220.5 218.1L221.0 217.4L221.5 216.6L222.0 215.6L222.5 214.4L223.0 212.9L223.5 211.3L224.0 209.6L224.5 207.6L225.0 205.5L225.5 203.3L226.0 200.8L226.5 198.3L227.0 195.6L227.5 192.8L228.0 189.8L228.5 186.8L229.0 183.6L229.5 180.4L230.0 177.1L230.5 173.7L231.0 170.2L231.5 166.8L232.0 163.3L232.5 159.7L233.0 156.2L233.5 152.6L234.0 149.1L234.5 145.6L235.0 142.1L235.5 138.7L236.0 135.3L236.5 132.0L237.0 128.8L237.5 125.7L238.0 122.7L238.5 119.8L239.0 117.0L239.5 114.3L240.0 111.8L240.5 109.4L241.0 107.2L241.5 105.1L242.0 103.2L242.5 101.5L243.0 99.9L243.5 98.5L244.0 97.4L244.5 96.4L245.0 95.6L245.5 95.0L246.0 94.6L246.5 94.4L247.0 94.4L247.5 94.6L248.0 95.1L248.5 95.7L249.0 96.5L249.5 97.5L250.0 98.7L250.5 100.1L251.0 101.7L251.5 103.4L252.0 105.3L252.5 107.4L253.0 109.7L253.5 112.1L254.0 114.6L254.5 117.3L255.0 120.1L255.5 123.1L256.0 126.1L256.5 129.2L257.0 132.5L257.5 135.8L258.0 139.1L258.5 142.6L259.0 146.0L259.5 149.6L260.0 153.1L260.5 156.6L261.0 160.2L261.5 163.7L262.0 167.2L262.5 170.7L263.0 174.1L263.5 177.5L264.0 180.8L264.5 184.0L265.0 187.2L265.5 190.2L266.0 193.1L266.5 195.9L267.0 198.6L267.5 201.2L268.0 203.6L268.5 205.8L269.0 207.9L269.5 209.8L270.0 211.6L270.5 213.1L271.0 214.5L271.5 215.7L272.0 216.7L272.5 217.5L273.0 218.1L273.5 218.6L274.0 218.8L274.5 218.8L275.0 218.6L275.5 218.2L276.0 217.6L276.5 216.8L277.0 215.8L277.5 214.6L278.0 213.3L278.5 211.7L279.0 210.0L279.5 208.1L280.0 206.0L280.5 203.8L281.0 201.4L281.5 198.9L282.0 196.2L282.5 193.4L283.0 190.5L283.5 187.4L284.0 184.3L284.5 181.1L285.0 177.8L285.5 174.4L286.0 171.0L286.5 167.5L287.0 164.0L287.5 160.5L288.0 157.0L288.5 153.4L289.0 149.9L289.5 146.4L290.0 142.9L290.5 139.5L291.0 136.1L291.5 132.8L292.0 129.5L292.5 126.4L293.0 123.3L293.5 120.4L294.0 117.6L294.5 114.9L295.0 112.3L295.5 109.9L296.0 107.6L296.5 105.5L297.0 103.6L297.5 101.8L298.0 100.2L298.5 98.8L299.0 97.6L299.5 96.6L300.0 95.7L300.5 95.1L301.0 94.7L301.5 94.4L302.0 94.4L302.5 94.6L303.0 95.0L303.5 95.5L304.0 96.3L304.5 97.3L305.0 98.4L305.5 99.8L306.0 101.3L306.5 103.0L307.0 104.9L307.5 107.0L308.0 109.2L308.5 111.5L309.0 114.1L309.5 116.7L310.0 119.5L310.5 122.4L311.0 125.4L311.5 128.5L312.0 131.7L312.5 135.0L313.0 138.4L313.5 141.8L314.0 145.3L314.5 148.8L315.0 152.3L315.5 155.9L316.0 159.4L316.5 162.9L317.0 166.5L317.5 169.9L318.0 173.4L318.5 176.8L319.0 180.1L319.5 183.3L320.0 186.5L320.5 189.5L321.0 192.5L321.5 195.3L322.0 198.0L322.5 200.6L323.0 203.0L323.5 205.3L324.0 207.5L324.5 209.4L325.0 211.2L325.5 212.8L326.0 214.2L326.5 215.5L327.0 216.5L327.5 217.4L328.0 218.0L328.5 218.5L329.0 218.7L329.5 218.8L330.0 218.6L330.5 218.3L331.0 217.7L331.5 217.0L332.0 216.1L332.5 214.9L333.0 213.6L333.5 212.1L334.0 210.4L334.5 208.5L335.0 206.5L335.5 204.3L336.0 201.9L336.5 199.4L337.0 196.8L337.5 194.0L338.0 191.1L338.5 188.1L339.0 185.0L339.5 181.8L340.0 178.5L340.5 175.2L341.0 171.8L341.5 168.3L342.0 164.8L342.5 161.3L343.0 157.7L343.5 154.2L344.0 150.7L344.5 147.1L345.0 143.6L345.5 140.2L346.0 136.8L346.5 133.5L347.0 130.2L347.5 127.1L348.0 124.0L348.5 121.0L349.0 118.2L349.5 115.5L350.0 112.9L350.5 110.4L351.0 108.1L351.5 106.0L352.0 104.0L352.5 102.2L353.0 100.6L353.5 99.1L354.0 97.9L354.5 96.8L355.0 95.9L355.5 95.2L356.0 94.8L356.5 94.5L357.0 94.4L357.5 94.5L358.0 94.9L358.5 95.4L359.0 96.1L359.5 97.0L360.0 98.2L360.5 99.5L361.0 101.0L361.5 102.6L362.0 104.5L362.5 106.5L363.0 108.7L363.5 111.0L364.0 113.5L364.5 116.1L365.0 118.9L365.5 121.8L366.0 124.8L366.5 127.8L367.0 131.0L367.5 134.3L368.0 137.7L368.5 141.1L369.0 144.5L369.5 148.0L370.0 151.5L370.5 155.1L371.0 158.6L371.5 162.2L372.0 165.7L372.5 169.2L373.0 172.6L373.5 176.0L374.0 179.4L374.5 182.6L375.0 185.8L375.5 188.9L376.0 191.9L376.5 194.7L377.0 197.5L377.5 200.1L378.0 202.5L378.5 204.8L379.0 207.0L379.5 209.0L380.0 210.8L380.5 212.5L381.0 213.9L381.5 215.2L382.0 216.3L382.5 217.2L383.0 217.9L383.5 218.4L384.0 218.7L384.5 218.8L385.0 218.7L385.5 218.4L386.0 217.9L386.5 217.2L387.0 216.3L387.5 215.2L388.0 213.9L388.5 212.4L389.0 210.8L389.5 208.9L390.0 206.9L390.5 204.8L391.0 202.5L391.5 200.0L392.0 197.4L392.5 194.6L393.0 191.8L393.5 188.8L394.0 185.7L394.5 182.5L395.0 179.3L395.5 175.9L396.0 172.5L396.5 169.1L397.0 165.6L397.5 162.1L398.0 158.5L398.5 155.0L399.0 151.4L399.5 147.9L400.0 144.4L400.5 141.0L401.0 137.6L401.5 134.2L402.0 130.9L402.5 127.8L403.0 124.7L403.5 121.7L404.0 118.8L404.5 116.0L405.0 113.4L405.5 110.9L406.0 108.6L406.5 106.4L407.0 104.4L407.5 102.6L408.0 100.9L408.5 99.4L409.0 98.1L409.5 97.0L410.0 96.1L410.5 95.4L411.0 94.8L411.5 94.5L412.0 94.4L412.5 94.5L413.0 94.8L413.5 95.3L414.0 95.9L414.5 96.8L415.0 97.9L415.5 99.2L416.0 100.6L416.5 102.2L417.0 104.1L417.5 106.0L418.0 108.2L418.5 110.5L419.0 112.9L419.5 115.5L420.0 118.3L420.5 121.1L421.0 124.1L421.5 127.2L422.0 130.3L422.5 133.6L423.0 136.9L423.5 140.3L424.0 143.8L424.5 147.2L425.0 150.8L425.5 154.3L426.0 157.8L426.5 161.4L427.0 164.9L427.5 168.4L428.0 171.9L428.5 175.3L429.0 178.6L429.5 181.9L430.0 185.1L430.5 188.2L431.0 191.2L431.5 194.1L432.0 196.9L432.5 199.5L433.0 202.0L433.5 204.3L434.0 206.5L434.5 208.6L435.0 210.4L435.5 212.1L436.0 213.6L436.5 214.9L437.0 216.1L437.5 217.0L438.0 217.8L438.5 218.3L439.0 218.7L439.5 218.8L440.0 218.7L440.5 218.5L441.0 218.0L441.5 217.4L442.0 216.5L442.5 215.4L443.0 214.2L443.5 212.8L444.0 211.1L444.5 209.4L445.0 207.4L445.5 205.3L446.0 203.0L446.5 200.5L447.0 198.0L447.5 195.2L448.0 192.4L448.5 189.4L449.0 186.4L449.5 183.2L450.0 180.0L450.5 176.7L451.0 173.3L451.5 169.8L452.0 166.3L452.5 162.8L453.0 159.3L453.5 155.7L454.0 152.2L454.5 148.7L455.0 145.2L455.5 141.7L456.0 138.3L456.5 134.9L457.0 131.7L457.5 128.4L458.0 125.3L458.5 122.3L459.0 119.4L459.5 116.6L460.0 114.0L460.5 111.5L461.0 109.1L461.5 106.9L462.0 104.8L462.5 103.0L463.0 101.3L463.5 99.7L464.0 98.4L464.5 97.2L465.0 96.3L465.5 95.5L466.0 94.9L466.5 94.6L467.0 94.4L467.5 94.4L468.0 94.7L468.5 95.1L469.0 95.8L469.5 96.6L470.0 97.6L470.5 98.9L471.0 100.3L471.5 101.9L472.0 103.6L472.5 105.6L473.0 107.7L473.5 110.0L474.0 112.4L474.5 115.0L475.0 117.7L475.5 120.5L476.0 123.4L476.5 126.5L477.0 129.6L477.5 132.9L478.0 136.2L478.5 139.6L479.0 143.0L479.5 146.5L480.0 150.0L480.5 153.5L481.0 157.1L481.5 160.6L482.0 164.1L482.5 167.6L483.0 171.1L483.5 174.5L484.0 177.9L484.5 181.2L485.0 184.4L485.5 187.5L486.0 190.6L486.5 193.5L487.0 196.3L487.5 198.9L488.0 201.5L488.5 203.8L489.0 206.1L489.5 208.1L490.0 210.0L490.5 211.8L491.0 213.3L491.5 214.7L492.0 215.8L492.5 216.8L493.0 217.6L493.5 218.2L494.0 218.6L494.5 218.8L495.0 218.8L495.5 218.5L496.0 218.1L496.5 217.5L497.0 216.7L497.5 215.7L498.0 214.5L498.5 213.1L499.0 211.5L499.5 209.8L500.0 207.8L500.5 205.7L501.0 203.5L501.5 201.1L502.0 198.5L502.5 195.9L503.0 193.0L503.5 190.1L504.0 187.1L504.5 183.9L505.0 180.7L505.5 177.4L506.0 174.0L506.5 170.6L507.0 167.1L507.5 163.6L508.0 160.1L508.5 156.5L509.0 153.0L509.5 149.5L510.0 145.9L510.5 142.5L511.0 139.0L511.5 135.7L512.0 132.4L512.5 129.1L513.0 126.0L513.5 123.0L514.0 120.0L514.5 117.2L515.0 114.6L515.5 112.0L516.0 109.6L516.5 107.4L517.0 105.3L517.5 103.4L518.0 101.6L518.5 100.1L519.0 98.7L519.5 97.5L520.0 96.5L520.5 95.7L521.0 95.0L521.5 94.6L522.0 94.4L522.5 94.4" stroke="#d0202f" stroke-width="1.25" fill="none"/><path d="M13.3 151.3L13.8 148.0L14.3 144.7L14.8 141.5L15.3 138.3L15.8 135.1L16.3 132.1L16.8 129.1L17.3 126.2L17.8 123.4L18.3 120.7L18.8 118.2L19.3 115.7L19.8 113.4L20.3 111.2L20.8 109.2L21.3 107.3L21.8 105.6L22.3 104.1L22.8 102.7L23.3 101.5L23.8 100.5L24.3 99.7L24.8 99.0L25.3 98.6L25.8 98.3L26.3 98.2L26.8 98.3L27.3 98.6L27.8 99.1L28.3 99.8L28.8 100.6L29.3 101.6L29.8 102.9L30.3 104.3L30.8 105.8L31.3 107.5L31.8 109.4L32.3 111.5L32.8 113.7L33.3 116.0L33.8 118.4L34.3 121.0L34.8 123.7L35.3 126.5L35.8 129.4L36.3 132.4L36.8 135.5L37.3 138.6L37.8 141.8L38.3 145.1L38.8 148.3L39.3 151.6L39.8 155.0L40.3 158.3L40.8 161.6L41.3 164.9L41.8 168.2L42.3 171.5L42.8 174.7L43.3 177.8L43.8 180.9L44.3 183.8L44.8 186.7L45.3 189.5L45.8 192.2L46.3 194.8L46.8 197.3L47.3 199.6L47.8 201.8L48.3 203.8L48.8 205.7L49.3 207.4L49.8 209.0L50.3 210.4L50.8 211.6L51.3 212.6L51.8 213.5L52.3 214.1L52.8 214.6L53.3 214.9L53.8 215.0L54.3 214.9L54.8 214.6L55.3 214.2L55.8 213.5L56.3 212.7L56.8 211.7L57.3 210.5L57.8 209.1L58.3 207.5L58.8 205.8L59.3 203.9L59.8 201.9L60.3 199.7L60.8 197.4L61.3 195.0L61.8 192.4L62.3 189.7L62.8 186.9L63.3 184.0L63.8 181.1L64.3 178.0L64.8 174.9L65.3 171.7L65.8 168.4L66.3 165.2L66.8 161.8L67.3 158.5L67.8 155.2L68.3 151.9L68.8 148.6L69.3 145.3L69.8 142.0L70.3 138.8L70.8 135.7L71.3 132.6L71.8 129.6L72.3 126.7L72.8 123.9L73.3 121.2L73.8 118.6L74.3 116.1L74.8 113.8L75.3 111.6L75.8 109.6L76.3 107.7L76.8 105.9L77.3 104.4L77.8 103.0L78.3 101.7L78.8 100.7L79.3 99.8L79.8 99.1L80.3 98.6L80.8 98.3L81.3 98.2L81.8 98.3L82.3 98.5L82.8 99.0L83.3 99.6L83.8 100.4L84.3 101.5L84.8 102.6L85.3 104.0L85.8 105.5L86.3 107.2L86.8 109.1L87.3 111.1L87.8 113.3L88.3 115.6L88.8 118.0L89.3 120.6L89.8 123.2L90.3 126.0L90.8 128.9L91.3 131.9L91.8 134.9L92.3 138.1L92.8 141.2L93.3 144.5L93.8 147.8L94.3 151.1L94.8 154.4L95.3 157.7L95.8 161.0L96.3 164.4L96.8 167.6L97.3 170.9L97.8 174.1L98.3 177.2L98.8 180.3L99.3 183.3L99.8 186.2L100.3 189.1L100.8 191.8L101.3 194.4L101.8 196.9L102.3 199.2L102.8 201.4L103.3 203.5L103.8 205.4L104.3 207.1L104.8 208.7L105.3 210.1L105.8 211.4L106.3 212.4L106.8 213.3L107.3 214.0L107.8 214.5L108.3 214.9L108.8 215.0L109.3 214.9L109.8 214.7L110.3 214.3L110.8 213.6L111.3 212.8L111.8 211.8L112.3 210.7L112.8 209.3L113.3 207.8L113.8 206.1L114.3 204.3L114.8 202.3L115.3 200.1L115.8 197.9L116.3 195.4L116.8 192.9L117.3 190.2L117.8 187.4L118.3 184.6L118.8 181.6L119.3 178.5L119.8 175.4L120.3 172.2L120.8 169.0L121.3 165.7L121.8 162.4L122.3 159.1L122.8 155.8L123.3 152.5L123.8 149.1L124.3 145.9L124.8 142.6L125.3 139.4L125.8 136.2L126.3 133.1L126.8 130.1L127.3 127.2L127.8 124.4L128.3 121.7L128.8 119.1L129.3 116.6L129.8 114.2L130.3 112.0L130.8 109.9L131.3 108.0L131.8 106.2L132.3 104.6L132.8 103.2L133.3 101.9L133.8 100.8L134.3 99.9L134.8 99.2L135.3 98.7L135.8 98.4L136.3 98.2L136.8 98.2L137.3 98.5L137.8 98.9L138.3 99.5L138.8 100.3L139.3 101.3L139.8 102.4L140.3 103.7L140.9 105.2L141.4 106.9L141.9 108.7L142.4 110.7L142.9 112.9L143.4 115.1L143.9 117.6L144.4 120.1L144.9 122.7L145.4 125.5L145.9 128.4L146.4 131.3L146.9 134.4L147.4 137.5L147.9 140.7L148.4 143.9L148.9 147.2L149.4 150.5L149.9 153.8L150.4 157.1L150.9 160.5L151.4 163.8L151.9 167.1L152.4 170.3L152.9 173.5L153.4 176.7L153.9 179.8L154.4 182.8L154.9 185.7L155.4 188.6L155.9 191.3L156.4 193.9L156.9 196.4L157.4 198.8L157.9 201.0L158.4 203.1L158.9 205.1L159.4 206.8L159.9 208.4L160.4 209.9L160.9 211.2L161.4 212.3L161.9 213.2L162.4 213.9L162.9 214.5L163.4 214.8L163.9 215.0L164.4 215.0L164.9 214.8L165.4 214.4L165.9 213.8L166.4 213.0L166.9 212.0L167.4 210.9L167.9 209.6L168.4 208.1L168.9 206.4L169.4 204.6L169.9 202.7L170.4 200.5L170.9 198.3L171.4 195.9L171.9 193.3L172.4 190.7L172.9 187.9L173.4 185.1L173.9 182.1L174.4 179.1L174.9 176.0L175.4 172.8L175.9 169.6L176.4 166.3L176.9 163.0L177.4 159.7L177.9 156.4L178.4 153.0L178.9 149.7L179.4 146.4L179.9 143.2L180.4 140.0L180.9 136.8L181.4 133.7L181.9 130.7L182.4 127.7L182.9 124.9L183.4 122.1L183.9 119.5L184.4 117.0L184.9 114.6L185.4 112.4L185.9 110.3L186.4 108.3L186.9 106.5L187.4 104.9L187.9 103.4L188.4 102.1L188.9 101.0L189.4 100.1L189.9 99.3L190.4 98.8L190.9 98.4L191.4 98.2L191.9 98.2L192.4 98.4L192.9 98.8L193.4 99.4L193.9 100.1L194.4 101.1L194.9 102.2L195.4 103.5L195.9 105.0L196.4 106.6L196.9 108.4L197.4 110.4L197.9 112.5L198.4 114.7L198.9 117.1L199.4 119.6L199.9 122.3L200.4 125.0L200.9 127.9L201.4 130.8L201.9 133.8L202.4 136.9L202.9 140.1L203.4 143.3L203.9 146.6L204.4 149.9L204.9 153.2L205.4 156.5L205.9 159.9L206.4 163.2L206.9 166.5L207.4 169.7L207.9 173.0L208.4 176.1L208.9 179.2L209.4 182.3L209.9 185.2L210.4 188.1L210.9 190.8L211.4 193.5L211.9 196.0L212.4 198.4L212.9 200.6L213.4 202.8L213.9 204.7L214.4 206.5L214.9 208.2L215.4 209.7L215.9 211.0L216.4 212.1L216.9 213.0L217.4 213.8L217.9 214.4L218.4 214.8L218.9 215.0L219.4 215.0L219.9 214.8L220.4 214.4L220.9 213.9L221.4 213.1L221.9 212.2L222.4 211.1L222.9 209.8L223.4 208.4L223.9 206.7L224.4 205.0L224.9 203.0L225.4 200.9L225.9 198.7L226.4 196.3L226.9 193.8L227.4 191.2L227.9 188.4L228.4 185.6L228.9 182.6L229.4 179.6L229.9 176.5L230.4 173.4L230.9 170.2L231.4 166.9L231.9 163.6L232.4 160.3L232.9 157.0L233.4 153.6L233.9 150.3L234.4 147.0L234.9 143.7L235.4 140.5L235.9 137.3L236.4 134.2L236.9 131.2L237.4 128.2L237.9 125.4L238.4 122.6L238.9 120.0L239.4 117.4L239.9 115.0L240.4 112.8L240.9 110.6L241.4 108.6L241.9 106.8L242.4 105.2L242.9 103.7L243.4 102.4L243.9 101.2L244.4 100.2L244.9 99.5L245.4 98.9L245.9 98.5L246.4 98.2L246.9 98.2L247.4 98.4L247.9 98.7L248.4 99.3L248.9 100.0L249.4 100.9L249.9 102.0L250.4 103.3L250.9 104.7L251.4 106.3L251.9 108.1L252.4 110.0L252.9 112.1L253.4 114.3L253.9 116.7L254.4 119.2L254.9 121.8L255.4 124.5L255.9 127.4L256.4 130.3L256.9 133.3L257.4 136.4L257.9 139.5L258.4 142.8L258.9 146.0L259.4 149.3L259.9 152.6L260.4 155.9L260.9 159.3L261.4 162.6L261.9 165.9L262.4 169.2L262.9 172.4L263.4 175.6L263.9 178.7L264.4 181.7L264.9 184.7L265.4 187.6L265.9 190.3L266.4 193.0L266.9 195.6L267.4 198.0L267.9 200.3L268.4 202.4L268.9 204.4L269.4 206.2L269.9 207.9L270.4 209.4L270.9 210.7L271.4 211.9L271.9 212.9L272.4 213.7L272.9 214.3L273.4 214.7L273.9 214.9L274.4 215.0L274.9 214.8L275.4 214.5L275.9 214.0L276.4 213.3L276.9 212.4L277.4 211.3L277.9 210.1L278.4 208.6L278.9 207.0L279.4 205.3L279.9 203.4L280.4 201.3L280.9 199.1L281.4 196.7L281.9 194.2L282.4 191.6L282.9 188.9L283.4 186.1L283.9 183.2L284.4 180.2L284.9 177.1L285.4 173.9L285.9 170.7L286.4 167.5L286.9 164.2L287.4 160.9L287.9 157.5L288.4 154.2L288.9 150.9L289.4 147.6L289.9 144.3L290.4 141.1L290.9 137.9L291.4 134.8L291.9 131.7L292.4 128.8L292.9 125.9L293.4 123.1L293.9 120.4L294.4 117.9L294.9 115.4L295.4 113.1L295.9 111.0L296.4 109.0L296.9 107.1L297.4 105.4L297.9 103.9L298.4 102.6L298.9 101.4L299.4 100.4L299.9 99.6L300.4 99.0L300.9 98.5L301.4 98.3L301.9 98.2L302.4 98.3L302.9 98.6L303.4 99.2L303.9 99.8L304.4 100.7L304.9 101.8L305.4 103.0L305.9 104.4L306.4 106.0L306.9 107.8L307.4 109.7L307.9 111.7L308.4 113.9L308.9 116.3L309.4 118.7L309.9 121.3L310.4 124.0L310.9 126.9L311.4 129.8L311.9 132.8L312.4 135.8L312.9 139.0L313.4 142.2L313.9 145.4L314.4 148.7L314.9 152.0L315.4 155.4L315.9 158.7L316.4 162.0L316.9 165.3L317.4 168.6L317.9 171.8L318.4 175.0L318.9 178.2L319.4 181.2L319.9 184.2L320.4 187.1L320.9 189.9L321.4 192.5L321.9 195.1L322.4 197.6L322.9 199.9L323.4 202.0L323.9 204.0L324.4 205.9L324.9 207.6L325.4 209.1L325.9 210.5L326.4 211.7L326.9 212.7L327.4 213.5L327.9 214.2L328.4 214.7L328.9 214.9L329.4 215.0L329.9 214.9L330.4 214.6L330.9 214.1L331.4 213.4L331.9 212.6L332.4 211.5L332.9 210.3L333.4 208.9L333.9 207.3L334.4 205.6L334.9 203.7L335.4 201.7L335.9 199.5L336.4 197.2L336.9 194.7L337.4 192.1L337.9 189.4L338.4 186.6L338.9 183.7L339.4 180.7L339.9 177.6L340.4 174.5L340.9 171.3L341.4 168.1L341.9 164.8L342.4 161.5L342.9 158.1L343.4 154.8L343.9 151.5L344.4 148.2L344.9 144.9L345.4 141.7L345.9 138.5L346.4 135.3L346.9 132.3L347.4 129.3L347.9 126.4L348.4 123.6L348.9 120.9L349.4 118.3L349.9 115.9L350.4 113.5L350.9 111.4L351.4 109.3L351.9 107.5L352.4 105.7L352.9 104.2L353.4 102.8L353.9 101.6L354.4 100.6L354.9 99.7L355.4 99.1L355.9 98.6L356.4 98.3L356.9 98.2L357.4 98.3L357.9 98.6L358.4 99.0L358.9 99.7L359.4 100.6L359.9 101.6L360.4 102.8L360.9 104.2L361.4 105.7L361.9 107.4L362.4 109.3L362.9 111.3L363.4 113.5L363.9 115.8L364.4 118.3L364.9 120.9L365.4 123.5L365.9 126.3L366.4 129.2L366.9 132.2L367.4 135.3L367.9 138.4L368.4 141.6L368.9 144.9L369.4 148.1L369.9 151.4L370.4 154.8L370.9 158.1L371.4 161.4L371.9 164.7L372.4 168.0L372.9 171.3L373.4 174.5L373.9 177.6L374.4 180.7L374.9 183.7L375.4 186.6L375.9 189.4L376.4 192.1L376.9 194.7L377.4 197.1L377.9 199.5L378.4 201.7L378.9 203.7L379.4 205.6L379.9 207.3L380.4 208.9L380.9 210.3L381.4 211.5L381.9 212.6L382.4 213.4L382.9 214.1L383.4 214.6L383.9 214.9L384.4 215.0L384.9 214.9L385.4 214.7L385.9 214.2L386.4 213.6L386.9 212.7L387.4 211.7L387.9 210.5L388.4 209.2L388.9 207.6L389.4 205.9L389.9 204.1L390.4 202.0L390.9 199.9L391.4 197.6L391.9 195.1L392.4 192.6L392.9 189.9L393.4 187.1L393.9 184.2L394.4 181.2L394.9 178.2L395.5 175.1L396.0 171.9L396.5 168.6L397.0 165.4L397.5 162.0L398.0 158.7L398.5 155.4L399.0 152.1L399.5 148.8L400.0 145.5L400.5 142.2L401.0 139.0L401.5 135.9L402.0 132.8L402.5 129.8L403.0 126.9L403.5 124.1L404.0 121.4L404.5 118.8L405.0 116.3L405.5 113.9L406.0 111.7L406.5 109.7L407.0 107.8L407.5 106.0L408.0 104.4L408.5 103.0L409.0 101.8L409.5 100.7L410.0 99.9L410.5 99.2L411.0 98.7L411.5 98.3L412.0 98.2L412.5 98.3L413.0 98.5L413.5 99.0L414.0 99.6L414.5 100.4L415.0 101.4L415.5 102.6L416.0 103.9L416.5 105.4L417.0 107.1L417.5 109.0L418.0 111.0L418.5 113.1L419.0 115.4L419.5 117.8L420.0 120.4L420.5 123.1L421.0 125.8L421.5 128.7L422.0 131.7L422.5 134.7L423.0 137.9L423.5 141.1L424.0 144.3L424.5 147.6L425.0 150.9L425.5 154.2L426.0 157.5L426.5 160.8L427.0 164.2L427.5 167.4L428.0 170.7L428.5 173.9L429.0 177.1L429.5 180.1L430.0 183.1L430.5 186.1L431.0 188.9L431.5 191.6L432.0 194.2L432.5 196.7L433.0 199.1L433.5 201.3L434.0 203.3L434.5 205.3L435.0 207.0L435.5 208.6L436.0 210.1L436.5 211.3L437.0 212.4L437.5 213.3L438.0 214.0L438.5 214.5L439.0 214.8L439.5 215.0L440.0 214.9L440.5 214.7L441.0 214.3L441.5 213.7L442.0 212.9L442.5 211.9L443.0 210.8L443.5 209.4L444.0 207.9L444.5 206.2L445.0 204.4L445.5 202.4L446.0 200.3L446.5 198.0L447.0 195.6L447.5 193.0L448.0 190.4L448.5 187.6L449.0 184.7L449.5 181.8L450.0 178.7L450.5 175.6L451.0 172.4L451.5 169.2L452.0 165.9L452.5 162.6L453.0 159.3L453.5 156.0L454.0 152.7L454.5 149.3L455.0 146.0L455.5 142.8L456.0 139.6L456.5 136.4L457.0 133.3L457.5 130.3L458.0 127.4L458.5 124.6L459.0 121.8L459.5 119.2L460.0 116.7L460.5 114.3L461.0 112.1L461.5 110.0L462.0 108.1L462.5 106.3L463.0 104.7L463.5 103.3L464.0 102.0L464.5 100.9L465.0 100.0L465.5 99.3L466.0 98.7L466.5 98.4L467.0 98.2L467.5 98.2L468.0 98.5L468.5 98.9L469.0 99.5L469.5 100.2L470.0 101.2L470.5 102.3L471.0 103.7L471.5 105.1L472.0 106.8L472.5 108.6L473.0 110.6L473.5 112.7L474.0 115.0L474.5 117.4L475.0 119.9L475.5 122.6L476.0 125.3L476.5 128.2L477.0 131.2L477.5 134.2L478.0 137.3L478.5 140.5L479.0 143.7L479.5 147.0L480.0 150.3L480.5 153.6L481.0 156.9L481.5 160.3L482.0 163.6L482.5 166.9L483.0 170.1L483.5 173.3L484.0 176.5L484.5 179.6L485.0 182.6L485.5 185.6L486.0 188.4L486.5 191.1L487.0 193.8L487.5 196.3L488.0 198.7L488.5 200.9L489.0 203.0L489.5 204.9L490.0 206.7L490.5 208.4L491.0 209.8L491.5 211.1L492.0 212.2L492.5 213.1L493.0 213.9L493.5 214.4L494.0 214.8L494.5 215.0L495.0 215.0L495.5 214.8L496.0 214.4L496.5 213.8L497.0 213.0L497.5 212.1L498.0 211.0L498.5 209.7L499.0 208.2L499.5 206.5L500.0 204.7L500.5 202.8L501.0 200.7L501.5 198.4L502.0 196.0L502.5 193.5L503.0 190.9L503.5 188.1L504.0 185.2L504.5 182.3L505.0 179.3L505.5 176.2L506.0 173.0L506.5 169.8L507.0 166.5L507.5 163.2L508.0 159.9L508.5 156.6L509.0 153.2L509.5 149.9L510.0 146.6L510.5 143.4L511.0 140.1L511.5 137.0L512.0 133.9L512.5 130.8L513.0 127.9L513.5 125.0L514.0 122.3L514.5 119.7L515.0 117.1L515.5 114.8L516.0 112.5L516.5 110.4L517.0 108.4L517.5 106.6L518.0 105.0L518.5 103.5L519.0 102.2L519.5 101.1L520.0 100.1L520.5 99.4L521.0 98.8L521.5 98.4L522.0 98.2L522.5 98.2" stroke="#c41c2e" stroke-width="1.2" fill="none"/><path d="M3.5 34H21L12.3 42Z" fill="#b33bd8"/><path d="M3.5 34H21L19 36H5.5Z" fill="#7fd3f2"/><circle cx="12.5" cy="157" r="2.6" fill="none" stroke="#e8d8f0" stroke-width="1"/><rect x="18.00" y="283.30" width="538.00" height="10.20" fill="#cdcdcd"/><path d="M11.8 285.3L7.2 288.7L11.8 292.1" stroke="#5a5a5a" stroke-width="2" fill="none"/><path d="M564 285.3L568.6 288.7L564 292.1" stroke="#5a5a5a" stroke-width="2" fill="none"/><rect x="2.00" y="299.50" width="58.00" height="58.00" fill="#c9c9c9"/><rect x="3.00" y="300.50" width="56.00" height="56.00" fill="#fbfbfb"/><rect x="4.00" y="301.50" width="55.00" height="55.00" fill="#f0f0f0"/><text x="7.00" y="317.00" font-size="11" fill="#000">T1</text><text x="7.00" y="331.75" font-size="11" fill="#000">T2</text><text x="7.00" y="352.00" font-size="11" fill="#000">T2-T1</text><rect x="27.50" y="306.50" width="12.00" height="15.00" fill="#e1e1e1" stroke="#adadad" stroke-width="1"/><rect x="44.50" y="306.50" width="12.00" height="15.00" fill="#e1e1e1" stroke="#adadad" stroke-width="1"/><path d="M29.8 313.8l4.6-4.6v3.1h4.6v3h-4.6v3.1z" fill="#000"/><path d="M54.8 313.8l-4.6-4.6v3.1h-4.6v3h4.6v3.1z" fill="#000"/><rect x="27.50" y="324.50" width="12.00" height="13.00" fill="#e1e1e1" stroke="#adadad" stroke-width="1"/><rect x="44.50" y="324.50" width="12.00" height="13.00" fill="#e1e1e1" stroke="#adadad" stroke-width="1"/><path d="M29.8 330.9l4.6-4.6v3.1h4.6v3h-4.6v3.1z" fill="#000"/><path d="M54.8 330.9l-4.6-4.6v3.1h-4.6v3h4.6v3.1z" fill="#000"/><rect x="61.50" y="299.50" width="355.00" height="57.50" fill="#a0a0a0"/><rect x="62.50" y="300.50" width="354.00" height="56.50" fill="#fff"/><rect x="61.50" y="299.50" width="355.00" height="1.50" fill="#6d6d6d"/><rect x="61.50" y="299.50" width="1.50" height="57.50" fill="#6d6d6d"/><text x="77.60" y="311.75" font-size="11" fill="#000">Время</text><text x="151.70" y="311.75" font-size="11" fill="#000">Канал_A</text><text x="231.60" y="311.75" font-size="11" fill="#000">Канал_B</text><text x="77.60" y="324.50" font-size="11" fill="#000">0.000 s</text><text x="193.80" y="324.50" font-size="11" fill="#000" text-anchor="end">0.000 V</text><text x="274.00" y="324.50" font-size="11" fill="#000" text-anchor="end">0.000 V</text><text x="77.60" y="337.75" font-size="11" fill="#000">0.000 s</text><text x="193.80" y="337.75" font-size="11" fill="#000" text-anchor="end">0.000 V</text><text x="274.00" y="337.75" font-size="11" fill="#000" text-anchor="end">0.000 V</text><text x="77.60" y="350.50" font-size="11" fill="#000">0.000 s</text><text x="193.80" y="350.50" font-size="11" fill="#000" text-anchor="end">0.000 V</text><text x="274.00" y="350.50" font-size="11" fill="#000" text-anchor="end">0.000 V</text><rect x="425.50" y="306.50" width="60.00" height="20.00" fill="#e1e1e1" stroke="#adadad" stroke-width="1"/><text x="455.50" y="320.50" font-size="11" fill="#000" text-anchor="middle">Экран</text><rect x="425.50" y="334.50" width="60.00" height="20.00" fill="#e1e1e1" stroke="#adadad" stroke-width="1"/><text x="455.50" y="348.50" font-size="11" fill="#000" text-anchor="middle">Сохранить</text><text x="494.50" y="358.00" font-size="11" fill="#000" textLength="44" lengthAdjust="spacingAndGlyphs">Внешняя</text><circle cx="550.5" cy="355.5" r="5.8" fill="#fff" stroke="#b4b4b4"/><rect x="3.00" y="371.00" width="131.00" height="1.00" fill="#dcdcdc"/><rect x="3.00" y="372.00" width="131.00" height="1.00" fill="#ffffff"/><rect x="3.00" y="371.00" width="1.00" height="72.00" fill="#dcdcdc"/><rect x="4.00" y="372.00" width="1.00" height="71.00" fill="#ffffff"/><rect x="6.50" y="366.00" width="60.00" height="12.00" fill="#f0f0f0"/><text x="9.50" y="375.50" font-size="11" fill="#000">Развертка</text><rect x="136.75" y="371.00" width="126.75" height="1.00" fill="#dcdcdc"/><rect x="136.75" y="372.00" width="126.75" height="1.00" fill="#ffffff"/><rect x="136.75" y="371.00" width="1.00" height="72.00" fill="#dcdcdc"/><rect x="137.75" y="372.00" width="1.00" height="71.00" fill="#ffffff"/><rect x="141.50" y="366.00" width="47.00" height="12.00" fill="#f0f0f0"/><text x="144.50" y="375.50" font-size="11" fill="#000">Канал A</text><rect x="265.50" y="371.00" width="128.50" height="1.00" fill="#dcdcdc"/><rect x="265.50" y="372.00" width="128.50" height="1.00" fill="#ffffff"/><rect x="265.50" y="371.00" width="1.00" height="72.00" fill="#dcdcdc"/><rect x="266.50" y="372.00" width="1.00" height="71.00" fill="#ffffff"/><rect x="270.50" y="366.00" width="47.00" height="12.00" fill="#f0f0f0"/><text x="273.50" y="375.50" font-size="11" fill="#000">Канал B</text><rect x="396.00" y="371.00" width="175.00" height="1.00" fill="#dcdcdc"/><rect x="396.00" y="372.00" width="175.00" height="1.00" fill="#ffffff"/><rect x="396.00" y="371.00" width="1.00" height="72.00" fill="#dcdcdc"/><rect x="397.00" y="372.00" width="1.00" height="71.00" fill="#ffffff"/><rect x="400.60" y="366.00" width="86.00" height="12.00" fill="#f0f0f0"/><text x="403.60" y="375.50" font-size="11" fill="#000">Синхронизация</text><text x="3.60" y="393.60" font-size="11" fill="#000">Шкала:</text><text x="139.00" y="393.60" font-size="11" fill="#000">Шкала</text><text x="267.60" y="393.60" font-size="11" fill="#000">Шкала</text><text x="400.00" y="393.60" font-size="11" fill="#000">Запуск</text><text x="4.00" y="413.60" font-size="11" fill="#000">задержка X</text><text x="139.00" y="413.60" font-size="11" fill="#000" textLength="58.5" lengthAdjust="spacingAndGlyphs">смещение Y</text><text x="267.60" y="413.60" font-size="11" fill="#000" textLength="58.5" lengthAdjust="spacingAndGlyphs">смещение Y</text><text x="400.00" y="413.60" font-size="11" fill="#000">Уровень</text><rect x="47.50" y="378.50" width="82.00" height="19.00" fill="#fff" stroke="#7a7a7a" stroke-width="1"/><text x="53.50" y="391.75" font-size="11" fill="#000">1 us/Div</text><rect x="178.50" y="378.50" width="83.00" height="19.00" fill="#fff" stroke="#7a7a7a" stroke-width="1"/><text x="184.50" y="391.75" font-size="11" fill="#000">50 mV/Div</text><rect x="308.50" y="378.50" width="83.00" height="19.00" fill="#fff" stroke="#7a7a7a" stroke-width="1"/><text x="314.50" y="391.75" font-size="11" fill="#000">50 mV/Div</text><rect x="68.50" y="400.50" width="61.00" height="18.00" fill="#fff" stroke="#7a7a7a" stroke-width="1"/><text x="74.00" y="413.00" font-size="11" fill="#000">0</text><rect x="202.50" y="400.50" width="59.00" height="18.00" fill="#fff" stroke="#7a7a7a" stroke-width="1"/><text x="208.25" y="413.00" font-size="11" fill="#000">0</text><rect x="332.50" y="400.50" width="59.00" height="18.00" fill="#fff" stroke="#7a7a7a" stroke-width="1"/><text x="338.25" y="413.00" font-size="11" fill="#000">0</text><rect x="457.50" y="404.50" width="84.00" height="17.00" fill="#fff" stroke="#7a7a7a" stroke-width="1"/><text x="464.00" y="416.50" font-size="11" fill="#000">1</text><rect x="541.50" y="404.50" width="27.00" height="17.00" fill="#fff" stroke="#7a7a7a" stroke-width="1"/><text x="551.00" y="416.50" font-size="11" fill="#000">V</text><rect x="458.50" y="383.50" width="15.00" height="14.00" fill="#cce8ff" stroke="#1d5276" stroke-width="1"/><rect x="476.50" y="383.50" width="15.00" height="14.00" fill="#e1e1e1" stroke="#adadad" stroke-width="1"/><path d="M461.2 394.6h4.6v-7.2h3.9M463.4 392.2l2.4-2.5l2.4 2.5" stroke="#000" stroke-width="1.3" fill="none"/><path d="M479.3 386.3h4.5v7.1h4.1M481.4 388.1l2.4 2.5l2.4-2.5" stroke="#000" stroke-width="1.3" fill="none"/><rect x="497.50" y="383.50" width="16.00" height="16.00" fill="#cce8ff" stroke="#1d5276" stroke-width="1"/><text x="505.60" y="395.50" font-size="11" fill="#000" text-anchor="middle">A</text><rect x="516.50" y="383.50" width="17.00" height="16.00" fill="#cccccc" stroke="#c4c4c4" stroke-width="1"/><text x="525.05" y="395.50" font-size="11" fill="#9a9a9a" text-anchor="middle">B</text><rect x="536.50" y="383.50" width="31.00" height="16.00" fill="#cccccc" stroke="#c4c4c4" stroke-width="1"/><text x="552.05" y="395.50" font-size="11" fill="#9a9a9a" text-anchor="middle">Внеш</text><rect x="9.50" y="423.50" width="24.00" height="17.00" fill="#cce8ff" stroke="#1d5276" stroke-width="1"/><text x="21.50" y="436.00" font-size="11" fill="#000" text-anchor="middle">Y/T</text><rect x="36.50" y="423.50" width="25.00" height="17.00" fill="#e1e1e1" stroke="#adadad" stroke-width="1"/><text x="49.50" y="436.00" font-size="11" fill="#000" text-anchor="middle">Add</text><rect x="66.50" y="423.50" width="27.00" height="17.00" fill="#e1e1e1" stroke="#adadad" stroke-width="1"/><text x="80.00" y="436.00" font-size="11" fill="#000" text-anchor="middle">B/A</text><rect x="96.50" y="423.50" width="27.00" height="17.00" fill="#e1e1e1" stroke="#adadad" stroke-width="1"/><text x="110.25" y="436.00" font-size="11" fill="#000" text-anchor="middle">A/B</text><rect x="140.50" y="423.50" width="24.00" height="17.00" fill="#cce8ff" stroke="#1d5276" stroke-width="1"/><text x="152.50" y="436.00" font-size="11" fill="#000" text-anchor="middle">AC</text><rect x="167.50" y="423.50" width="24.00" height="17.00" fill="#e1e1e1" stroke="#adadad" stroke-width="1"/><text x="179.50" y="436.00" font-size="11" fill="#000" text-anchor="middle">0</text><rect x="194.50" y="423.50" width="24.00" height="17.00" fill="#e1e1e1" stroke="#adadad" stroke-width="1"/><text x="206.50" y="436.00" font-size="11" fill="#000" text-anchor="middle">DC</text><circle cx="250.3" cy="430.5" r="5.8" fill="#fff" stroke="#b0b0b0" stroke-width="1.1"/><circle cx="250.3" cy="430.5" r="3.2" fill="#c4c4c4"/><rect x="270.50" y="425.50" width="23.00" height="16.00" fill="#cce8ff" stroke="#1d5276" stroke-width="1"/><text x="282.00" y="437.50" font-size="11" fill="#000" text-anchor="middle">AC</text><rect x="296.50" y="425.50" width="21.00" height="16.00" fill="#e1e1e1" stroke="#adadad" stroke-width="1"/><text x="307.20" y="437.50" font-size="11" fill="#000" text-anchor="middle">0</text><rect x="320.50" y="425.50" width="24.00" height="16.00" fill="#e1e1e1" stroke="#adadad" stroke-width="1"/><text x="332.70" y="437.50" font-size="11" fill="#000" text-anchor="middle">DC</text><rect x="347.50" y="425.50" width="18.00" height="16.00" fill="#e1e1e1" stroke="#adadad" stroke-width="1"/><text x="356.70" y="437.50" font-size="11" fill="#000" text-anchor="middle">-</text><circle cx="385.5" cy="432.8" r="5.8" fill="#fff" stroke="#b0b0b0" stroke-width="1.1"/><circle cx="385.5" cy="432.8" r="3.2" fill="#c4c4c4"/><rect x="401.50" y="423.50" width="40.00" height="17.00" fill="#e1e1e1" stroke="#adadad" stroke-width="1"/><text x="421.55" y="436.00" font-size="11" fill="#000" text-anchor="middle">Одн.</text><rect x="444.50" y="423.50" width="45.00" height="17.00" fill="#e1e1e1" stroke="#adadad" stroke-width="1"/><text x="467.00" y="436.00" font-size="11" fill="#000" text-anchor="middle">Норм</text><rect x="493.50" y="423.50" width="34.00" height="17.00" fill="#e1e1e1" stroke="#adadad" stroke-width="1"/><text x="510.55" y="436.00" font-size="11" fill="#000" text-anchor="middle">Авто</text><rect x="531.50" y="423.50" width="36.00" height="17.00" fill="#cce8ff" stroke="#1d5276" stroke-width="1"/><text x="549.50" y="436.00" font-size="11" fill="#000" text-anchor="middle">Нет</text></svg></div><div class="win" style="left:755px;top:119px"><svg width="575" height="446"><rect x="0.00" y="0.00" width="575.00" height="446.00" fill="#f0f0f0"/><rect x="0.00" y="0.00" width="575.00" height="31.00" fill="#ffffff"/><rect x="0.00" y="31.00" width="575.00" height="1.00" fill="#6e6e6e"/><rect x="0.00" y="0.00" width="1.00" height="446.00" fill="#a4a4a4"/><rect x="574.00" y="0.00" width="1.00" height="446.00" fill="#a4a4a4"/><rect x="0.00" y="445.00" width="575.00" height="1.00" fill="#b0b0b0"/><rect x="0.00" y="0.00" width="575.00" height="1.00" fill="#b4b4b4"/><path d="M571 435h1.5v1.5h-1.5zM571 439h1.5v1.5h-1.5zM567 442h1.5v1.5h-1.5zM571 442h1.5v1.5h-1.5zM563 442h1.5v1.5h-1.5z" fill="#b8b8b8"/><text x="0" y="20.2" font-size="13.2" fill="#9a9a9a" transform="translate(9.9 0) scale(0.88 1)">Осциллограф-XSC1</text><path d="M554 10L564 20M564 10L554 20" stroke="#777" stroke-width="1.1"/><rect x="1.00" y="31.00" width="573.00" height="251.00" fill="#7a7a7a"/><rect x="2.00" y="32.00" width="571.00" height="249.00" fill="#ffffff"/><rect x="2.00" y="32.00" width="569.00" height="247.00" fill="#a9b0b0"/><rect x="3.50" y="33.80" width="567.50" height="245.20" fill="#000"/><path d="M67.5 43.5V271.5M122.5 43.5V271.5M177.5 43.5V271.5M232.5 43.5V271.5M287.5 43.5V271.5M343.5 43.5V271.5M398.5 43.5V271.5M453.5 43.5V271.5M508.5 43.5V271.5M13.5 80.5H563.5M13.5 118.5H563.5M13.5 195.5H563.5M13.5 233.5H563.5" stroke="#ececec" stroke-width="1" stroke-dasharray="3 3.1" fill="none"/><path d="M18.5 156.5v2.5M24.5 156.5v1.5M29.5 156.5v2.5M35.5 156.5v1.5M40.5 156.5v2.5M46.5 156.5v1.5M51.5 156.5v2.5M57.5 156.5v1.5M62.5 156.5v2.5M73.5 156.5v2.5M79.5 156.5v1.5M84.5 156.5v2.5M90.5 156.5v1.5M95.5 156.5v2.5M101.5 156.5v1.5M106.5 156.5v2.5M112.5 156.5v1.5M117.5 156.5v2.5M128.5 156.5v2.5M134.5 156.5v1.5M139.5 156.5v2.5M145.5 156.5v1.5M150.5 156.5v2.5M156.5 156.5v1.5M161.5 156.5v2.5M167.5 156.5v1.5M172.5 156.5v2.5M183.5 156.5v2.5M189.5 156.5v1.5M194.5 156.5v2.5M200.5 156.5v1.5M205.5 156.5v2.5M211.5 156.5v1.5M216.5 156.5v2.5M222.5 156.5v1.5M227.5 156.5v2.5M238.5 156.5v2.5M244.5 156.5v1.5M249.5 156.5v2.5M255.5 156.5v1.5M260.5 156.5v2.5M266.5 156.5v1.5M272.5 156.5v2.5M277.5 156.5v1.5M283.5 156.5v2.5M294.5 156.5v2.5M299.5 156.5v1.5M305.5 156.5v2.5M310.5 156.5v1.5M316.5 156.5v2.5M321.5 156.5v1.5M327.5 156.5v2.5M332.5 156.5v1.5M338.5 156.5v2.5M349.5 156.5v2.5M354.5 156.5v1.5M360.5 156.5v2.5M365.5 156.5v1.5M371.5 156.5v2.5M376.5 156.5v1.5M382.5 156.5v2.5M387.5 156.5v1.5M393.5 156.5v2.5M404.5 156.5v2.5M409.5 156.5v1.5M415.5 156.5v2.5M420.5 156.5v1.5M426.5 156.5v2.5M431.5 156.5v1.5M437.5 156.5v2.5M442.5 156.5v1.5M448.5 156.5v2.5M459.5 156.5v2.5M464.5 156.5v1.5M470.5 156.5v2.5M475.5 156.5v1.5M481.5 156.5v2.5M486.5 156.5v1.5M492.5 156.5v2.5M497.5 156.5v1.5M503.5 156.5v2.5M514.5 156.5v2.5M520.5 156.5v1.5M525.5 156.5v2.5M531.5 156.5v1.5M536.5 156.5v2.5M542.5 156.5v1.5M547.5 156.5v2.5M553.5 156.5v1.5M558.5 156.5v2.5" stroke="#eeeeee" stroke-width="1" fill="none"/><path d="M12.5 42.5H563.5V271.5H12.5M12.5 156.5H566.5" stroke="#f4f4f4" stroke-width="1.2" fill="none"/><path d="M12.5 42.5V271.5" stroke="#4caf50" stroke-width="1.1"/><path d="M287.5 39V44" stroke="#f4f4f4" stroke-width="1.4"/><path d="M12.5 157L15.0 164.3L15.5 163.9L16.0 163.5L16.5 163.0L17.0 162.6L17.5 162.1L18.0 161.6L18.5 161.0L19.0 160.5L19.5 159.9L20.0 159.3L20.5 158.8L21.0 158.2L21.5 157.6L22.0 157.0L22.5 156.4L23.0 155.8L23.5 155.2L24.0 154.6L24.5 154.0L25.0 153.4L25.5 152.9L26.0 152.3L26.5 151.8L27.0 151.2L27.5 150.7L28.0 150.2L28.5 149.8L29.0 149.3L29.5 148.9L30.0 148.5L30.5 148.1L31.0 147.7L31.5 147.4L32.0 147.1L32.5 146.9L33.0 146.6L33.5 146.4L34.0 146.2L34.5 146.1L35.0 146.0L35.5 145.9L36.0 145.9L36.5 145.9L37.0 145.9L37.5 146.0L38.0 146.1L38.5 146.2L39.0 146.4L39.5 146.6L40.0 146.8L40.5 147.1L41.0 147.4L41.5 147.7L42.0 148.1L42.5 148.4L43.0 148.8L43.5 149.3L44.0 149.7L44.5 150.2L45.0 150.7L45.5 151.2L46.0 151.7L46.5 152.3L47.0 152.8L47.5 153.4L48.0 154.0L48.5 154.6L49.0 155.2L49.5 155.8L50.0 156.4L50.5 157.0L51.0 157.6L51.5 158.1L52.0 158.7L52.5 159.3L53.0 159.9L53.5 160.4L54.0 161.0L54.5 161.5L55.0 162.0L55.5 162.5L56.0 163.0L56.5 163.5L57.0 163.9L57.5 164.3L58.0 164.7L58.5 165.0L59.0 165.4L59.5 165.7L60.0 165.9L60.5 166.2L61.0 166.4L61.5 166.5L62.0 166.7L62.5 166.8L63.0 166.9L63.5 166.9L64.0 166.9L64.5 166.9L65.0 166.8L65.5 166.7L66.0 166.6L66.5 166.4L67.0 166.2L67.5 166.0L68.0 165.7L68.5 165.4L69.0 165.1L69.5 164.8L70.0 164.4L70.5 164.0L71.0 163.6L71.5 163.1L72.0 162.6L72.5 162.1L73.0 161.6L73.5 161.1L74.0 160.6L74.5 160.0L75.0 159.4L75.5 158.9L76.0 158.3L76.5 157.7L77.0 157.1L77.5 156.5L78.0 155.9L78.5 155.3L79.0 154.7L79.5 154.1L80.0 153.5L80.5 153.0L81.0 152.4L81.5 151.9L82.0 151.3L82.5 150.8L83.0 150.3L83.5 149.8L84.0 149.4L84.5 148.9L85.0 148.5L85.5 148.1L86.0 147.8L86.5 147.5L87.0 147.2L87.5 146.9L88.0 146.7L88.5 146.4L89.0 146.3L89.5 146.1L90.0 146.0L90.5 145.9L91.0 145.9L91.5 145.9L92.0 145.9L92.5 146.0L93.0 146.1L93.5 146.2L94.0 146.4L94.5 146.6L95.0 146.8L95.5 147.1L96.0 147.3L96.5 147.7L97.0 148.0L97.5 148.4L98.0 148.8L98.5 149.2L99.0 149.7L99.5 150.1L100.1 150.6L100.6 151.1L101.1 151.7L101.6 152.2L102.1 152.8L102.6 153.3L103.1 153.9L103.6 154.5L104.1 155.1L104.6 155.7L105.1 156.3L105.6 156.9L106.1 157.5L106.6 158.1L107.1 158.6L107.6 159.2L108.1 159.8L108.6 160.4L109.1 160.9L109.6 161.4L110.1 162.0L110.6 162.5L111.1 162.9L111.6 163.4L112.1 163.8L112.6 164.2L113.1 164.6L113.6 165.0L114.1 165.3L114.6 165.6L115.1 165.9L115.6 166.1L116.1 166.3L116.6 166.5L117.1 166.7L117.6 166.8L118.1 166.8L118.6 166.9L119.1 166.9L119.6 166.9L120.1 166.8L120.6 166.7L121.1 166.6L121.6 166.4L122.1 166.2L122.6 166.0L123.1 165.8L123.6 165.5L124.1 165.2L124.6 164.8L125.1 164.4L125.6 164.0L126.1 163.6L126.6 163.2L127.1 162.7L127.6 162.2L128.1 161.7L128.6 161.2L129.1 160.6L129.6 160.1L130.1 159.5L130.6 159.0L131.1 158.4L131.6 157.8L132.1 157.2L132.6 156.6L133.1 156.0L133.6 155.4L134.1 154.8L134.6 154.2L135.1 153.6L135.6 153.0L136.1 152.5L136.6 151.9L137.1 151.4L137.6 150.9L138.1 150.4L138.6 149.9L139.1 149.4L139.6 149.0L140.1 148.6L140.6 148.2L141.1 147.8L141.6 147.5L142.1 147.2L142.6 146.9L143.1 146.7L143.6 146.5L144.1 146.3L144.6 146.2L145.1 146.0L145.6 146.0L146.1 145.9L146.6 145.9L147.1 145.9L147.6 146.0L148.1 146.1L148.6 146.2L149.1 146.4L149.6 146.5L150.1 146.8L150.6 147.0L151.1 147.3L151.6 147.6L152.1 148.0L152.6 148.3L153.1 148.7L153.6 149.1L154.1 149.6L154.6 150.1L155.1 150.5L155.6 151.0L156.1 151.6L156.6 152.1L157.1 152.7L157.6 153.2L158.1 153.8L158.6 154.4L159.1 155.0L159.6 155.6L160.1 156.2L160.6 156.8L161.1 157.4L161.6 158.0L162.1 158.6L162.6 159.1L163.1 159.7L163.6 160.3L164.1 160.8L164.6 161.4L165.1 161.9L165.6 162.4L166.1 162.9L166.6 163.3L167.1 163.8L167.6 164.2L168.1 164.6L168.6 164.9L169.1 165.3L169.6 165.6L170.1 165.8L170.6 166.1L171.1 166.3L171.6 166.5L172.1 166.6L172.6 166.8L173.1 166.8L173.6 166.9L174.1 166.9L174.6 166.9L175.1 166.8L175.6 166.7L176.1 166.6L176.6 166.5L177.1 166.3L177.6 166.1L178.1 165.8L178.6 165.5L179.1 165.2L179.6 164.9L180.1 164.5L180.6 164.1L181.1 163.7L181.6 163.2L182.1 162.8L182.6 162.3L183.1 161.8L183.6 161.3L184.1 160.7L184.6 160.2L185.1 159.6L185.6 159.0L186.1 158.5L186.6 157.9L187.1 157.3L187.6 156.7L188.1 156.1L188.6 155.5L189.1 154.9L189.6 154.3L190.1 153.7L190.6 153.1L191.1 152.6L191.6 152.0L192.1 151.5L192.6 151.0L193.1 150.5L193.6 150.0L194.1 149.5L194.6 149.1L195.1 148.7L195.6 148.3L196.1 147.9L196.6 147.6L197.1 147.3L197.6 147.0L198.1 146.7L198.6 146.5L199.1 146.3L199.6 146.2L200.1 146.1L200.6 146.0L201.1 145.9L201.6 145.9L202.1 145.9L202.6 146.0L203.1 146.1L203.6 146.2L204.1 146.3L204.6 146.5L205.1 146.7L205.6 147.0L206.1 147.3L206.6 147.6L207.1 147.9L207.6 148.3L208.1 148.7L208.6 149.1L209.1 149.5L209.6 150.0L210.1 150.5L210.6 151.0L211.1 151.5L211.6 152.0L212.1 152.6L212.6 153.1L213.1 153.7L213.6 154.3L214.1 154.9L214.6 155.5L215.1 156.1L215.6 156.7L216.1 157.3L216.6 157.9L217.1 158.5L217.6 159.0L218.1 159.6L218.6 160.2L219.1 160.7L219.6 161.3L220.1 161.8L220.6 162.3L221.1 162.8L221.6 163.3L222.1 163.7L222.6 164.1L223.1 164.5L223.6 164.9L224.1 165.2L224.6 165.5L225.1 165.8L225.6 166.1L226.1 166.3L226.6 166.5L227.1 166.6L227.6 166.7L228.1 166.8L228.6 166.9L229.1 166.9L229.6 166.9L230.1 166.8L230.6 166.8L231.1 166.6L231.6 166.5L232.1 166.3L232.6 166.1L233.1 165.8L233.6 165.6L234.1 165.3L234.6 164.9L235.1 164.6L235.6 164.2L236.1 163.8L236.6 163.3L237.1 162.9L237.6 162.4L238.1 161.9L238.6 161.4L239.1 160.8L239.6 160.3L240.1 159.7L240.6 159.1L241.1 158.5L241.6 158.0L242.1 157.4L242.6 156.8L243.1 156.2L243.6 155.6L244.1 155.0L244.6 154.4L245.1 153.8L245.6 153.2L246.1 152.7L246.6 152.1L247.1 151.6L247.6 151.0L248.1 150.5L248.6 150.0L249.1 149.6L249.6 149.1L250.1 148.7L250.6 148.3L251.1 148.0L251.6 147.6L252.1 147.3L252.6 147.0L253.1 146.8L253.6 146.5L254.1 146.3L254.6 146.2L255.1 146.1L255.6 146.0L256.1 145.9L256.6 145.9L257.1 145.9L257.6 146.0L258.1 146.0L258.6 146.2L259.1 146.3L259.6 146.5L260.1 146.7L260.6 146.9L261.1 147.2L261.6 147.5L262.1 147.8L262.6 148.2L263.1 148.6L263.6 149.0L264.1 149.4L264.6 149.9L265.1 150.4L265.6 150.9L266.1 151.4L266.6 151.9L267.1 152.5L267.6 153.1L268.1 153.6L268.6 154.2L269.1 154.8L269.7 155.4L270.2 156.0L270.7 156.6L271.2 157.2L271.7 157.8L272.2 158.4L272.7 159.0L273.2 159.5L273.7 160.1L274.2 160.7L274.7 161.2L275.2 161.7L275.7 162.2L276.2 162.7L276.7 163.2L277.2 163.6L277.7 164.1L278.2 164.4L278.7 164.8L279.2 165.2L279.7 165.5L280.2 165.8L280.7 166.0L281.2 166.2L281.7 166.4L282.2 166.6L282.7 166.7L283.2 166.8L283.7 166.9L284.2 166.9L284.7 166.9L285.2 166.8L285.7 166.8L286.2 166.7L286.7 166.5L287.2 166.3L287.7 166.1L288.2 165.9L288.7 165.6L289.2 165.3L289.7 165.0L290.2 164.6L290.7 164.2L291.2 163.8L291.7 163.4L292.2 162.9L292.7 162.5L293.2 162.0L293.7 161.4L294.2 160.9L294.7 160.4L295.2 159.8L295.7 159.2L296.2 158.6L296.7 158.0L297.2 157.5L297.7 156.9L298.2 156.3L298.7 155.7L299.2 155.1L299.7 154.5L300.2 153.9L300.7 153.3L301.2 152.7L301.7 152.2L302.2 151.6L302.7 151.1L303.2 150.6L303.7 150.1L304.2 149.7L304.7 149.2L305.2 148.8L305.7 148.4L306.2 148.0L306.7 147.7L307.2 147.3L307.7 147.1L308.2 146.8L308.7 146.6L309.2 146.4L309.7 146.2L310.2 146.1L310.7 146.0L311.2 145.9L311.7 145.9L312.2 145.9L312.7 145.9L313.2 146.0L313.7 146.1L314.2 146.3L314.7 146.4L315.2 146.7L315.7 146.9L316.2 147.2L316.7 147.5L317.2 147.8L317.7 148.2L318.2 148.5L318.7 148.9L319.2 149.4L319.7 149.8L320.2 150.3L320.7 150.8L321.2 151.3L321.7 151.9L322.2 152.4L322.7 153.0L323.2 153.5L323.7 154.1L324.2 154.7L324.7 155.3L325.2 155.9L325.7 156.5L326.2 157.1L326.7 157.7L327.2 158.3L327.7 158.9L328.2 159.4L328.7 160.0L329.2 160.6L329.7 161.1L330.2 161.6L330.7 162.1L331.2 162.6L331.7 163.1L332.2 163.6L332.7 164.0L333.2 164.4L333.7 164.8L334.2 165.1L334.7 165.4L335.2 165.7L335.7 166.0L336.2 166.2L336.7 166.4L337.2 166.6L337.7 166.7L338.2 166.8L338.7 166.9L339.2 166.9L339.7 166.9L340.2 166.9L340.7 166.8L341.2 166.7L341.7 166.5L342.2 166.4L342.7 166.2L343.2 165.9L343.7 165.7L344.2 165.4L344.7 165.0L345.2 164.7L345.7 164.3L346.2 163.9L346.7 163.5L347.2 163.0L347.7 162.5L348.2 162.0L348.7 161.5L349.2 161.0L349.7 160.4L350.2 159.9L350.7 159.3L351.2 158.7L351.7 158.1L352.2 157.5L352.7 157.0L353.2 156.4L353.7 155.8L354.2 155.2L354.7 154.6L355.2 154.0L355.7 153.4L356.2 152.8L356.7 152.3L357.2 151.7L357.7 151.2L358.2 150.7L358.7 150.2L359.2 149.7L359.7 149.3L360.2 148.8L360.7 148.4L361.2 148.1L361.7 147.7L362.2 147.4L362.7 147.1L363.2 146.8L363.7 146.6L364.2 146.4L364.7 146.2L365.2 146.1L365.7 146.0L366.2 145.9L366.7 145.9L367.2 145.9L367.7 145.9L368.2 146.0L368.7 146.1L369.2 146.3L369.7 146.4L370.2 146.6L370.7 146.9L371.2 147.1L371.7 147.4L372.2 147.7L372.7 148.1L373.2 148.5L373.7 148.9L374.2 149.3L374.7 149.8L375.2 150.2L375.7 150.7L376.2 151.2L376.7 151.8L377.2 152.3L377.7 152.9L378.2 153.4L378.7 154.0L379.2 154.6L379.7 155.2L380.2 155.8L380.7 156.4L381.2 157.0L381.7 157.6L382.2 158.2L382.7 158.8L383.2 159.4L383.7 159.9L384.2 160.5L384.7 161.0L385.2 161.6L385.7 162.1L386.2 162.6L386.7 163.0L387.2 163.5L387.7 163.9L388.2 164.3L388.7 164.7L389.2 165.1L389.7 165.4L390.2 165.7L390.7 165.9L391.2 166.2L391.7 166.4L392.2 166.6L392.7 166.7L393.2 166.8L393.7 166.9L394.2 166.9L394.7 166.9L395.2 166.9L395.7 166.8L396.2 166.7L396.7 166.6L397.2 166.4L397.7 166.2L398.2 166.0L398.7 165.7L399.2 165.4L399.7 165.1L400.2 164.7L400.7 164.4L401.2 164.0L401.7 163.5L402.2 163.1L402.7 162.6L403.2 162.1L403.7 161.6L404.2 161.1L404.7 160.5L405.2 160.0L405.7 159.4L406.2 158.8L406.7 158.2L407.2 157.6L407.7 157.0L408.2 156.4L408.7 155.8L409.2 155.3L409.7 154.7L410.2 154.1L410.7 153.5L411.2 152.9L411.7 152.4L412.2 151.8L412.7 151.3L413.2 150.8L413.7 150.3L414.2 149.8L414.7 149.3L415.2 148.9L415.7 148.5L416.2 148.1L416.7 147.8L417.2 147.4L417.7 147.1L418.2 146.9L418.7 146.6L419.2 146.4L419.7 146.3L420.2 146.1L420.7 146.0L421.2 145.9L421.7 145.9L422.2 145.9L422.7 145.9L423.2 146.0L423.7 146.1L424.2 146.2L424.7 146.4L425.2 146.6L425.7 146.8L426.2 147.1L426.7 147.4L427.2 147.7L427.7 148.0L428.2 148.4L428.7 148.8L429.2 149.2L429.7 149.7L430.2 150.2L430.7 150.7L431.2 151.2L431.7 151.7L432.2 152.2L432.7 152.8L433.2 153.4L433.7 153.9L434.2 154.5L434.7 155.1L435.2 155.7L435.7 156.3L436.2 156.9L436.7 157.5L437.2 158.1L437.7 158.7L438.2 159.3L438.7 159.8L439.3 160.4L439.8 160.9L440.3 161.5L440.8 162.0L441.3 162.5L441.8 163.0L442.3 163.4L442.8 163.9L443.3 164.3L443.8 164.7L444.3 165.0L444.8 165.3L445.3 165.6L445.8 165.9L446.3 166.1L446.8 166.4L447.3 166.5L447.8 166.7L448.3 166.8L448.8 166.9L449.3 166.9L449.8 166.9L450.3 166.9L450.8 166.8L451.3 166.7L451.8 166.6L452.3 166.4L452.8 166.2L453.3 166.0L453.8 165.7L454.3 165.5L454.8 165.1L455.3 164.8L455.8 164.4L456.3 164.0L456.8 163.6L457.3 163.1L457.8 162.7L458.3 162.2L458.8 161.7L459.3 161.2L459.8 160.6L460.3 160.1L460.8 159.5L461.3 158.9L461.8 158.3L462.3 157.7L462.8 157.1L463.3 156.5L463.8 155.9L464.3 155.3L464.8 154.7L465.3 154.2L465.8 153.6L466.3 153.0L466.8 152.4L467.3 151.9L467.8 151.4L468.3 150.8L468.8 150.3L469.3 149.9L469.8 149.4L470.3 149.0L470.8 148.6L471.3 148.2L471.8 147.8L472.3 147.5L472.8 147.2L473.3 146.9L473.8 146.7L474.3 146.5L474.8 146.3L475.3 146.1L475.8 146.0L476.3 146.0L476.8 145.9L477.3 145.9L477.8 145.9L478.3 146.0L478.8 146.1L479.3 146.2L479.8 146.4L480.3 146.6L480.8 146.8L481.3 147.0L481.8 147.3L482.3 147.6L482.8 148.0L483.3 148.4L483.8 148.8L484.3 149.2L484.8 149.6L485.3 150.1L485.8 150.6L486.3 151.1L486.8 151.6L487.3 152.1L487.8 152.7L488.3 153.3L488.8 153.8L489.3 154.4L489.8 155.0L490.3 155.6L490.8 156.2L491.3 156.8L491.8 157.4L492.3 158.0L492.8 158.6L493.3 159.2L493.8 159.7L494.3 160.3L494.8 160.9L495.3 161.4L495.8 161.9L496.3 162.4L496.8 162.9L497.3 163.4L497.8 163.8L498.3 164.2L498.8 164.6L499.3 165.0L499.8 165.3L500.3 165.6L500.8 165.9L501.3 166.1L501.8 166.3L502.3 166.5L502.8 166.6L503.3 166.8L503.8 166.8L504.3 166.9L504.8 166.9L505.3 166.9L505.8 166.8L506.3 166.7L506.8 166.6L507.3 166.4L507.8 166.3L508.3 166.0L508.8 165.8L509.3 165.5L509.8 165.2L510.3 164.8L510.8 164.5L511.3 164.1L511.8 163.7L512.3 163.2L512.8 162.7L513.3 162.3L513.8 161.8L514.3 161.2L514.8 160.7L515.3 160.1L515.8 159.6L516.3 159.0L516.8 158.4L517.3 157.8L517.8 157.2L518.3 156.6L518.8 156.0L519.3 155.4L519.8 154.8L520.3 154.3L520.8 153.7L521.3 153.1L521.8 152.5L522.3 152.0L522.8 151.4L523.3 150.9L523.8 150.4" stroke="#c01e30" stroke-width="1.35" fill="none"/><path d="M3.5 34H21L12.3 42Z" fill="#b33bd8"/><path d="M3.5 34H21L19 36H5.5Z" fill="#7fd3f2"/><circle cx="12.5" cy="157" r="2.6" fill="none" stroke="#e8d8f0" stroke-width="1"/><rect x="18.00" y="283.30" width="538.00" height="10.20" fill="#cdcdcd"/><path d="M11.8 285.3L7.2 288.7L11.8 292.1" stroke="#5a5a5a" stroke-width="2" fill="none"/><path d="M564 285.3L568.6 288.7L564 292.1" stroke="#5a5a5a" stroke-width="2" fill="none"/><rect x="2.00" y="299.50" width="58.00" height="58.00" fill="#c9c9c9"/><rect x="3.00" y="300.50" width="56.00" height="56.00" fill="#fbfbfb"/><rect x="4.00" y="301.50" width="55.00" height="55.00" fill="#f0f0f0"/><text x="7.00" y="317.00" font-size="11" fill="#000">T1</text><text x="7.00" y="331.75" font-size="11" fill="#000">T2</text><text x="7.00" y="352.00" font-size="11" fill="#000">T2-T1</text><rect x="27.50" y="306.50" width="12.00" height="15.00" fill="#e1e1e1" stroke="#adadad" stroke-width="1"/><rect x="44.50" y="306.50" width="12.00" height="15.00" fill="#e1e1e1" stroke="#adadad" stroke-width="1"/><path d="M29.8 313.8l4.6-4.6v3.1h4.6v3h-4.6v3.1z" fill="#000"/><path d="M54.8 313.8l-4.6-4.6v3.1h-4.6v3h4.6v3.1z" fill="#000"/><rect x="27.50" y="324.50" width="12.00" height="13.00" fill="#e1e1e1" stroke="#adadad" stroke-width="1"/><rect x="44.50" y="324.50" width="12.00" height="13.00" fill="#e1e1e1" stroke="#adadad" stroke-width="1"/><path d="M29.8 330.9l4.6-4.6v3.1h4.6v3h-4.6v3.1z" fill="#000"/><path d="M54.8 330.9l-4.6-4.6v3.1h-4.6v3h4.6v3.1z" fill="#000"/><rect x="61.50" y="299.50" width="355.00" height="57.50" fill="#a0a0a0"/><rect x="62.50" y="300.50" width="354.00" height="56.50" fill="#fff"/><rect x="61.50" y="299.50" width="355.00" height="1.50" fill="#6d6d6d"/><rect x="61.50" y="299.50" width="1.50" height="57.50" fill="#6d6d6d"/><text x="77.60" y="311.75" font-size="11" fill="#000">Время</text><text x="151.70" y="311.75" font-size="11" fill="#000">Канал_A</text><text x="231.60" y="311.75" font-size="11" fill="#000">Канал_B</text><text x="77.60" y="324.50" font-size="11" fill="#000">0.000 s</text><text x="193.80" y="324.50" font-size="11" fill="#000" text-anchor="end">0.000 V</text><text x="77.60" y="337.75" font-size="11" fill="#000">0.000 s</text><text x="193.80" y="337.75" font-size="11" fill="#000" text-anchor="end">0.000 V</text><text x="77.60" y="350.50" font-size="11" fill="#000">0.000 s</text><text x="193.80" y="350.50" font-size="11" fill="#000" text-anchor="end">0.000 V</text><rect x="425.50" y="306.50" width="60.00" height="20.00" fill="#e1e1e1" stroke="#adadad" stroke-width="1"/><text x="455.50" y="320.50" font-size="11" fill="#000" text-anchor="middle">Экран</text><rect x="425.50" y="334.50" width="60.00" height="20.00" fill="#e1e1e1" stroke="#adadad" stroke-width="1"/><text x="455.50" y="348.50" font-size="11" fill="#000" text-anchor="middle">Сохранить</text><text x="494.50" y="358.00" font-size="11" fill="#000" textLength="44" lengthAdjust="spacingAndGlyphs">Внешняя</text><circle cx="550.5" cy="355.5" r="5.8" fill="#fff" stroke="#b4b4b4"/><rect x="3.00" y="371.00" width="131.00" height="1.00" fill="#dcdcdc"/><rect x="3.00" y="372.00" width="131.00" height="1.00" fill="#ffffff"/><rect x="3.00" y="371.00" width="1.00" height="72.00" fill="#dcdcdc"/><rect x="4.00" y="372.00" width="1.00" height="71.00" fill="#ffffff"/><rect x="6.50" y="366.00" width="60.00" height="12.00" fill="#f0f0f0"/><text x="9.50" y="375.50" font-size="11" fill="#000">Развертка</text><rect x="136.75" y="371.00" width="126.75" height="1.00" fill="#dcdcdc"/><rect x="136.75" y="372.00" width="126.75" height="1.00" fill="#ffffff"/><rect x="136.75" y="371.00" width="1.00" height="72.00" fill="#dcdcdc"/><rect x="137.75" y="372.00" width="1.00" height="71.00" fill="#ffffff"/><rect x="141.50" y="366.00" width="47.00" height="12.00" fill="#f0f0f0"/><text x="144.50" y="375.50" font-size="11" fill="#000">Канал A</text><rect x="265.50" y="371.00" width="128.50" height="1.00" fill="#dcdcdc"/><rect x="265.50" y="372.00" width="128.50" height="1.00" fill="#ffffff"/><rect x="265.50" y="371.00" width="1.00" height="72.00" fill="#dcdcdc"/><rect x="266.50" y="372.00" width="1.00" height="71.00" fill="#ffffff"/><rect x="270.50" y="366.00" width="47.00" height="12.00" fill="#f0f0f0"/><text x="273.50" y="375.50" font-size="11" fill="#000">Канал B</text><rect x="396.00" y="371.00" width="175.00" height="1.00" fill="#dcdcdc"/><rect x="396.00" y="372.00" width="175.00" height="1.00" fill="#ffffff"/><rect x="396.00" y="371.00" width="1.00" height="72.00" fill="#dcdcdc"/><rect x="397.00" y="372.00" width="1.00" height="71.00" fill="#ffffff"/><rect x="400.60" y="366.00" width="86.00" height="12.00" fill="#f0f0f0"/><text x="403.60" y="375.50" font-size="11" fill="#000">Синхронизация</text><text x="3.60" y="393.60" font-size="11" fill="#000">Шкала:</text><text x="139.00" y="393.60" font-size="11" fill="#000">Шкала</text><text x="267.60" y="393.60" font-size="11" fill="#000">Шкала</text><text x="400.00" y="393.60" font-size="11" fill="#000">Запуск</text><text x="4.00" y="413.60" font-size="11" fill="#000">задержка X</text><text x="139.00" y="413.60" font-size="11" fill="#000" textLength="58.5" lengthAdjust="spacingAndGlyphs">смещение Y</text><text x="267.60" y="413.60" font-size="11" fill="#000" textLength="58.5" lengthAdjust="spacingAndGlyphs">смещение Y</text><text x="400.00" y="413.60" font-size="11" fill="#000">Уровень</text><rect x="47.50" y="378.50" width="82.00" height="19.00" fill="#fff" stroke="#7a7a7a" stroke-width="1"/><text x="53.50" y="391.75" font-size="11" fill="#000">1 us/Div</text><rect x="178.50" y="378.50" width="83.00" height="19.00" fill="#fff" stroke="#7a7a7a" stroke-width="1"/><text x="184.50" y="391.75" font-size="11" fill="#000">50 mV/Div</text><rect x="308.50" y="378.50" width="83.00" height="19.00" fill="#fff" stroke="#7a7a7a" stroke-width="1"/><text x="314.50" y="391.75" font-size="11" fill="#000">500 mV/Div</text><rect x="68.50" y="400.50" width="61.00" height="18.00" fill="#fff" stroke="#7a7a7a" stroke-width="1"/><text x="74.00" y="413.00" font-size="11" fill="#000">0</text><rect x="202.50" y="400.50" width="59.00" height="18.00" fill="#fff" stroke="#7a7a7a" stroke-width="1"/><text x="208.25" y="413.00" font-size="11" fill="#000">0</text><rect x="332.50" y="400.50" width="59.00" height="18.00" fill="#fff" stroke="#7a7a7a" stroke-width="1"/><text x="338.25" y="413.00" font-size="11" fill="#000">0</text><rect x="457.50" y="404.50" width="84.00" height="17.00" fill="#fff" stroke="#7a7a7a" stroke-width="1"/><text x="464.00" y="416.50" font-size="11" fill="#000">1</text><rect x="541.50" y="404.50" width="27.00" height="17.00" fill="#fff" stroke="#7a7a7a" stroke-width="1"/><text x="551.00" y="416.50" font-size="11" fill="#000">V</text><rect x="458.50" y="383.50" width="15.00" height="14.00" fill="#cce8ff" stroke="#1d5276" stroke-width="1"/><rect x="476.50" y="383.50" width="15.00" height="14.00" fill="#e1e1e1" stroke="#adadad" stroke-width="1"/><path d="M461.2 394.6h4.6v-7.2h3.9M463.4 392.2l2.4-2.5l2.4 2.5" stroke="#000" stroke-width="1.3" fill="none"/><path d="M479.3 386.3h4.5v7.1h4.1M481.4 388.1l2.4 2.5l2.4-2.5" stroke="#000" stroke-width="1.3" fill="none"/><rect x="497.50" y="383.50" width="16.00" height="16.00" fill="#cce8ff" stroke="#1d5276" stroke-width="1"/><text x="505.60" y="395.50" font-size="11" fill="#000" text-anchor="middle">A</text><rect x="516.50" y="383.50" width="17.00" height="16.00" fill="#cccccc" stroke="#c4c4c4" stroke-width="1"/><text x="525.05" y="395.50" font-size="11" fill="#9a9a9a" text-anchor="middle">B</text><rect x="536.50" y="383.50" width="31.00" height="16.00" fill="#cccccc" stroke="#c4c4c4" stroke-width="1"/><text x="552.05" y="395.50" font-size="11" fill="#9a9a9a" text-anchor="middle">Внеш</text><rect x="9.50" y="423.50" width="24.00" height="17.00" fill="#cce8ff" stroke="#1d5276" stroke-width="1"/><text x="21.50" y="436.00" font-size="11" fill="#000" text-anchor="middle">Y/T</text><rect x="36.50" y="423.50" width="25.00" height="17.00" fill="#e1e1e1" stroke="#adadad" stroke-width="1"/><text x="49.50" y="436.00" font-size="11" fill="#000" text-anchor="middle">Add</text><rect x="66.50" y="423.50" width="27.00" height="17.00" fill="#e1e1e1" stroke="#adadad" stroke-width="1"/><text x="80.00" y="436.00" font-size="11" fill="#000" text-anchor="middle">B/A</text><rect x="96.50" y="423.50" width="27.00" height="17.00" fill="#e1e1e1" stroke="#adadad" stroke-width="1"/><text x="110.25" y="436.00" font-size="11" fill="#000" text-anchor="middle">A/B</text><rect x="140.50" y="423.50" width="24.00" height="17.00" fill="#cce8ff" stroke="#1d5276" stroke-width="1"/><text x="152.50" y="436.00" font-size="11" fill="#000" text-anchor="middle">AC</text><rect x="167.50" y="423.50" width="24.00" height="17.00" fill="#e1e1e1" stroke="#adadad" stroke-width="1"/><text x="179.50" y="436.00" font-size="11" fill="#000" text-anchor="middle">0</text><rect x="194.50" y="423.50" width="24.00" height="17.00" fill="#e1e1e1" stroke="#adadad" stroke-width="1"/><text x="206.50" y="436.00" font-size="11" fill="#000" text-anchor="middle">DC</text><circle cx="250.3" cy="430.5" r="5.8" fill="#fff" stroke="#b0b0b0" stroke-width="1.1"/><circle cx="250.3" cy="430.5" r="3.2" fill="#c4c4c4"/><rect x="270.50" y="425.50" width="23.00" height="16.00" fill="#cce8ff" stroke="#1d5276" stroke-width="1"/><text x="282.00" y="437.50" font-size="11" fill="#000" text-anchor="middle">AC</text><rect x="296.50" y="425.50" width="21.00" height="16.00" fill="#e1e1e1" stroke="#adadad" stroke-width="1"/><text x="307.20" y="437.50" font-size="11" fill="#000" text-anchor="middle">0</text><rect x="320.50" y="425.50" width="24.00" height="16.00" fill="#e1e1e1" stroke="#adadad" stroke-width="1"/><text x="332.70" y="437.50" font-size="11" fill="#000" text-anchor="middle">DC</text><rect x="347.50" y="425.50" width="18.00" height="16.00" fill="#e1e1e1" stroke="#adadad" stroke-width="1"/><text x="356.70" y="437.50" font-size="11" fill="#000" text-anchor="middle">-</text><circle cx="385.5" cy="432.8" r="5.8" fill="#fff" stroke="#b0b0b0" stroke-width="1.1"/><rect x="401.50" y="423.50" width="40.00" height="17.00" fill="#e1e1e1" stroke="#adadad" stroke-width="1"/><text x="421.55" y="436.00" font-size="11" fill="#000" text-anchor="middle">Одн.</text><rect x="444.50" y="423.50" width="45.00" height="17.00" fill="#e1e1e1" stroke="#adadad" stroke-width="1"/><text x="467.00" y="436.00" font-size="11" fill="#000" text-anchor="middle">Норм</text><rect x="493.50" y="423.50" width="34.00" height="17.00" fill="#e1e1e1" stroke="#adadad" stroke-width="1"/><text x="510.55" y="436.00" font-size="11" fill="#000" text-anchor="middle">Авто</text><rect x="531.50" y="423.50" width="36.00" height="17.00" fill="#cce8ff" stroke="#1d5276" stroke-width="1"/><text x="549.50" y="436.00" font-size="11" fill="#000" text-anchor="middle">Нет</text></svg></div></body></html>
